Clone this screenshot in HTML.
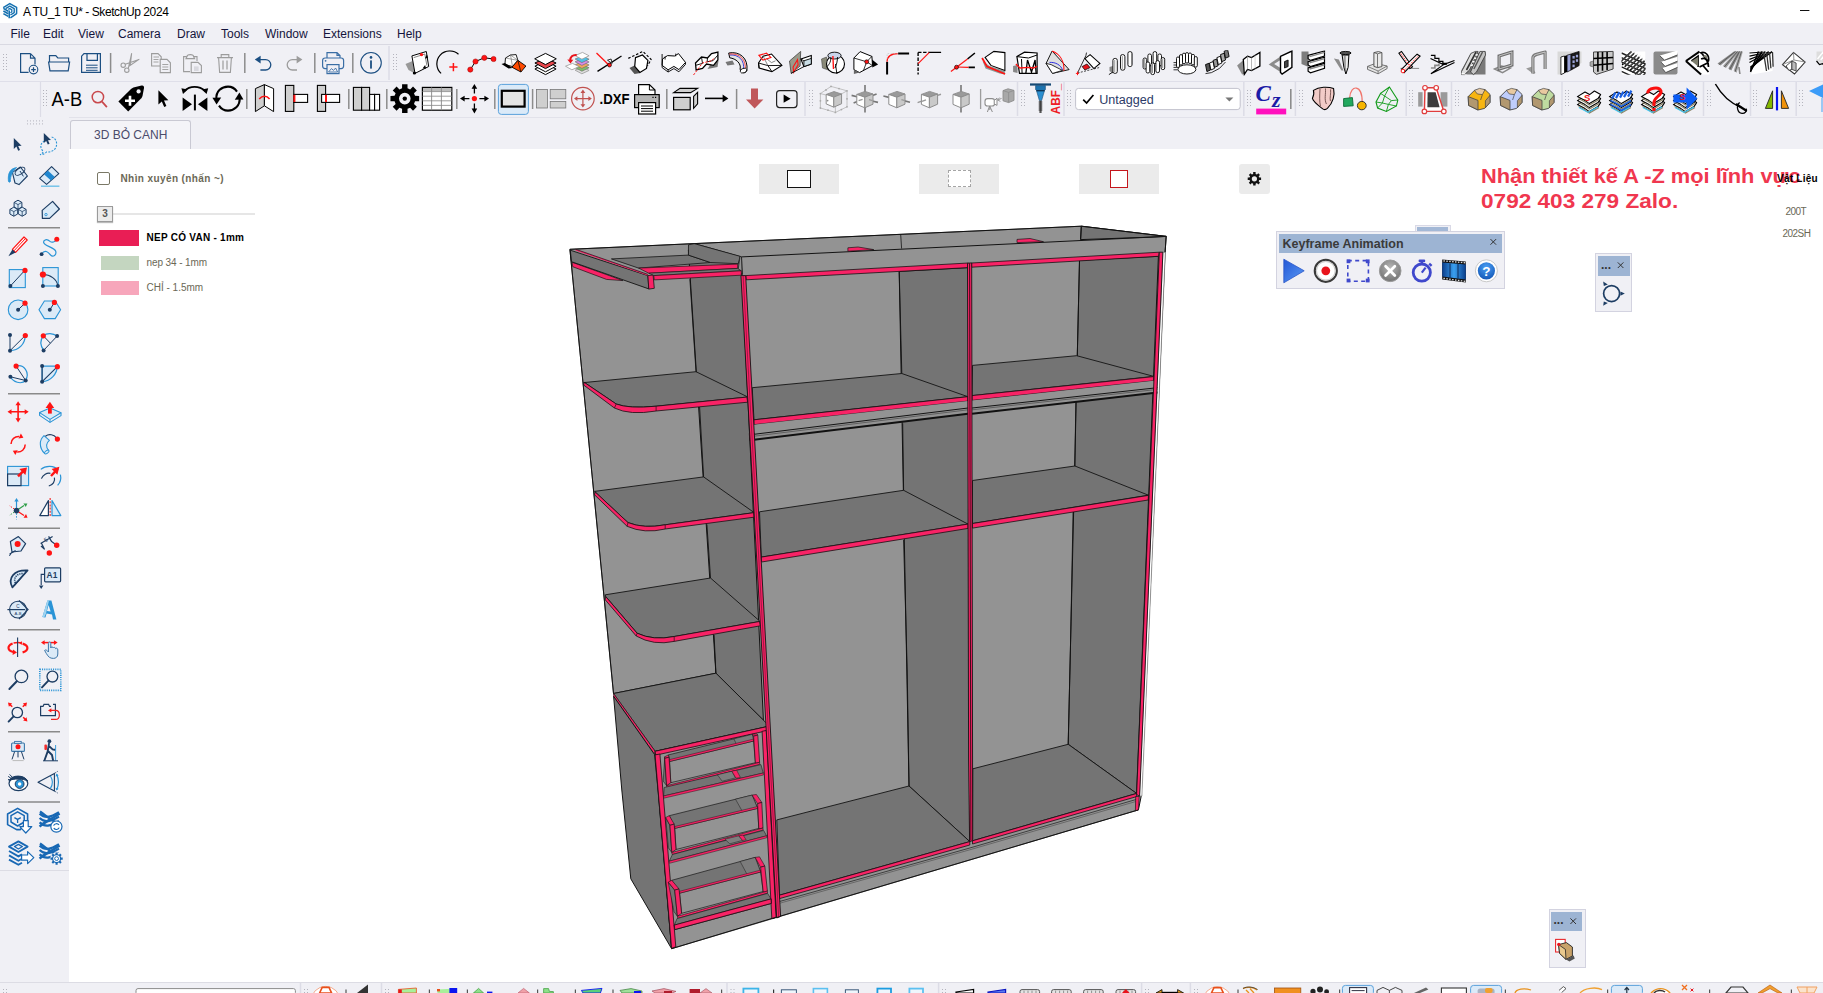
<!DOCTYPE html><html><head><meta charset="utf-8"><title>A TU_1 TU* - SketchUp 2024</title><style>
html,body{margin:0;padding:0;}
body{width:1823px;height:993px;overflow:hidden;background:#fff;position:relative;
 font-family:"Liberation Sans",sans-serif;font-size:12px;color:#000;}
.abs{position:absolute;}
#title{left:0;top:0;width:1823px;height:23px;background:#fff;}
#title .t{left:23px;top:5px;font-size:12px;line-height:15px;color:#000;white-space:nowrap;letter-spacing:-0.42px;}
#menubar{left:0;top:23px;width:1823px;height:21px;background:#f0f0f5;}
#menubar span{position:absolute;top:4px;font-size:12px;line-height:15px;color:#14143c;white-space:nowrap;}
#tb1{left:0;top:44px;width:1823px;height:37px;background:#f0f0f5;border-top:1.5px solid #d9d9e2;box-sizing:border-box;}
#tb2{left:0;top:80.5px;width:1823px;height:36.5px;background:#f0f0f5;border-top:1.6px solid #dfdfe9;box-sizing:border-box;}
#tabrow{left:0;top:117px;width:1823px;height:32px;background:#f0f0f5;border-top:1px solid #e2e2ea;box-sizing:border-box;}
#lefttb{left:0;top:117px;width:69px;height:865px;background:#f0f0f5;}
#leftlow{left:0;top:870px;width:69px;height:112px;background:#f0f0f5;border-top:1px solid #dcdce4;box-sizing:border-box}
#tab{left:70px;top:120px;width:121px;height:29px;box-sizing:border-box;border:1px solid #c9c9d3;border-bottom:none;
 border-radius:3px 3px 0 0;background:#f4f4f8;}
#tab span{position:absolute;left:23px;top:7px;font-size:12px;line-height:15px;color:#4b4b6b;white-space:nowrap;}
#view{left:69px;top:149px;width:1754px;height:833px;background:#fff;}
#bottom{left:0;top:982px;width:1823px;height:11px;background:#f0f0f5;border-top:1px solid #dcdce4;box-sizing:border-box;}
.leg{font-size:10px;line-height:12px;white-space:nowrap;color:#6b6856;}
.btn{background:#ebebeb;}
#red{left:1480.5px;top:164.3px;font-size:20px;line-height:25px;font-weight:bold;color:#f0374f;white-space:nowrap;}
#red div{transform-origin:0 0;}
.panel{background:#f0f0f5;border:1px solid #d3d3e0;box-sizing:border-box;}
.ptitle{background:#9db4d3;}
svg{position:absolute;left:0;top:0;}
</style></head><body>
<div id="title" class="abs"><div class="t abs">A TU_1 TU* - SketchUp 2024</div></div>
<div id="menubar" class="abs"><span style="left:10.5px">File</span><span style="left:43px">Edit</span><span style="left:78px">View</span><span style="left:118px">Camera</span><span style="left:177px">Draw</span><span style="left:221px">Tools</span><span style="left:265px">Window</span><span style="left:323px">Extensions</span><span style="left:397px">Help</span></div>
<div id="tb1" class="abs"></div><div id="tb2" class="abs"></div><div id="tabrow" class="abs"></div>
<div id="view" class="abs"></div>
<div id="lefttb" class="abs"></div><div id="leftlow" class="abs"></div>
<div id="tab" class="abs"><span>3D BỎ CANH</span></div>
<div id="bottom" class="abs"></div>
<div class="abs" style="left:97px;top:172px;width:13px;height:13px;border:1px solid #7a7866;border-radius:2px;box-sizing:border-box;background:#fff"></div>
<div class="abs leg" id="lg0" style="left:120.5px;top:173px;font-weight:bold;letter-spacing:0.4px">Nhìn xuyên (nhấn ~)</div>
<div class="abs" style="left:113px;top:212.5px;width:142px;height:2px;background:#e6e6e6"></div>
<div class="abs" style="left:97px;top:206px;width:16px;height:16px;border:1px solid #9a9a9a;box-sizing:border-box;background:#ebebeb;box-shadow:0 1px 1px #bbb;font-size:10px;line-height:14px;text-align:center;color:#555;font-weight:bold">3</div>
<div class="abs" style="left:99px;top:230px;width:40px;height:15.5px;background:#e91e55"></div>
<div class="abs leg" id="lg1" style="left:146.5px;top:232px;font-weight:bold;color:#000;letter-spacing:0.26px">NEP CÓ VAN - 1mm</div>
<div class="abs" style="left:101px;top:256px;width:38px;height:13.5px;background:#c4d6c0"></div>
<div class="abs leg" id="lg2" style="left:146.5px;top:257px;letter-spacing:-0.1px">nep 34 - 1mm</div>
<div class="abs" style="left:101px;top:281px;width:38px;height:13.5px;background:#f7a6bb"></div>
<div class="abs leg" id="lg3" style="left:146.5px;top:282px;">CHỈ - 1.5mm</div>
<div class="abs btn" style="left:759px;top:164px;width:80px;height:29.5px"></div>
<div class="abs" style="left:786.5px;top:170px;width:24.5px;height:17.5px;box-sizing:border-box;border:1.5px solid #111;background:#fff"></div>
<div class="abs btn" style="left:919px;top:164px;width:80px;height:29.5px"></div>
<div class="abs" style="left:947.5px;top:170px;width:23.5px;height:17px;box-sizing:border-box;border:1.5px dashed #a5a5a5;background:#fff"></div>
<div class="abs btn" style="left:1079px;top:164px;width:80px;height:29.5px"></div>
<div class="abs" style="left:1110px;top:170px;width:18px;height:17.5px;box-sizing:border-box;border:1.5px solid #c4161c;background:#fff"></div>
<div class="abs btn" style="left:1238.5px;top:164px;width:31.5px;height:29.5px;border-radius:3px"></div>
<div id="red" class="abs"><div id="r1" style="transform:scaleX(1.0905)">Nhận thiết kế A -Z mọi lĩnh vực</div><div id="r2" style="transform:scaleX(1.1295)">0792 403 279 Zalo.</div></div>
<div class="abs leg" id="vl" style="left:1777px;top:172.5px;font-weight:bold;color:#000;letter-spacing:0.25px">Vật Liệu</div>
<div class="abs leg" id="t200" style="left:1785.5px;top:205.5px;letter-spacing:-0.6px">200T</div>
<div class="abs leg" id="t202" style="left:1782.5px;top:227.5px;letter-spacing:-0.55px">202SH</div>
<div class="abs" style="left:1414.5px;top:224.5px;width:36px;height:8px;background:#f0f0f5;border:1px solid #d9d9e6;box-sizing:border-box"></div><div class="abs" style="left:1416.6px;top:227px;width:31.4px;height:4px;background:#a3b8d6"></div>
<div class="abs panel" style="left:1276px;top:230.5px;width:229px;height:58px"></div>
<div class="abs ptitle" style="left:1278.5px;top:233.5px;width:223px;height:19.5px"></div>
<div class="abs" id="kf" style="left:1282.5px;top:236.6px;font-size:12.5px;line-height:15px;font-weight:bold;color:#3a3a3a;white-space:nowrap">Keyframe Animation</div>
<div class="abs panel" style="left:1595px;top:253px;width:37px;height:59px"></div>
<div class="abs ptitle" style="left:1597.5px;top:256px;width:32px;height:19.5px"></div>
<div class="abs" style="left:1601px;top:257.5px;font-size:12px;line-height:15px;font-weight:bold;color:#333">...</div>
<div class="abs panel" style="left:1548.5px;top:909px;width:37px;height:58.5px"></div>
<div class="abs ptitle" style="left:1551px;top:912px;width:31px;height:19px"></div>
<div class="abs" style="left:1553.5px;top:913px;font-size:12px;line-height:15px;font-weight:bold;color:#333">...</div>
<svg width="1823" height="993" viewBox="0 0 1823 993">
<g id="wardrobe" stroke-linejoin="round"><polygon points="569.9,249.3 694.2,243.6 716.0,673.2 613.5,693.5" fill="#939393" stroke="#111" stroke-width="0.99"/>
<polygon points="688.4,250.0 741.5,256.9 766.7,723.4 715.9,673.2" fill="#747474" stroke="#111" stroke-width="0.99"/>
<polyline points="689.9,279.2 696.0,371.7" fill="none" stroke="#111" stroke-width="0.88"/>
<polygon points="694.2,243.6 1081.3,226.2 1166.2,236.4 1165.1,252.2 1141.2,796.3 1138.4,809.9 773.0,918.3 741.0,256.9" fill="#939393" stroke="#111" stroke-width="0.99"/>
<polygon points="1162.9,252.2 1165.3,252.2 1141.9,796.0 1139.5,796.0" fill="#fff" stroke="#777" stroke-width="0.66"/>
<polygon points="1081.3,226.2 1166.2,236.4 1152.0,237.1 1080.6,239.6" fill="#747474" stroke="#111" stroke-width="0.99"/>
<polyline points="1081.3,226.2 1080.6,239.6" fill="none" stroke="#111" stroke-width="0.99"/>
<polyline points="900.7,234.5 901.6,248.6" fill="none" stroke="#111" stroke-width="0.77"/>
<polyline points="741.5,256.9 1166.2,236.4" fill="none" stroke="#111" stroke-width="0.99"/>
<polygon points="847.9,247.8 858.1,247.0 873.8,249.6 847.9,251.2" fill="#f82366" stroke="#111" stroke-width="0.66"/>
<polygon points="1017.0,239.4 1030.0,238.5 1043.5,241.7 1017.0,242.6" fill="#f82366" stroke="#111" stroke-width="0.66"/>
<polyline points="741.5,256.9 742.1,274.4" fill="none" stroke="#111" stroke-width="0.99"/>
<polyline points="1166.2,236.4 1165.1,252.2" fill="none" stroke="#111" stroke-width="0.99"/>
<polygon points="899.2,271.4 968.3,267.6 969.8,841.6 909.0,786.0" fill="#747474" stroke="#111" stroke-width="0.99"/>
<polyline points="899.2,271.4 901.8,373.5" fill="none" stroke="#111" stroke-width="0.88"/>
<polygon points="752.2,387.7 901.8,373.5 967.9,396.7 754.0,419.8" fill="#747474" stroke="#111" stroke-width="0.88"/>
<polyline points="902.7,423.4 903.6,490.5" fill="none" stroke="#111" stroke-width="0.88"/>
<polygon points="759.5,511.8 903.6,490.3 968.0,524.1 761.3,557.1" fill="#747474" stroke="#111" stroke-width="0.88"/>
<polyline points="903.6,539.9 907.2,670.0 909.0,786.0" fill="none" stroke="#111" stroke-width="0.88"/>
<polygon points="776.8,819.9 909.0,786.0 969.8,841.6 779.5,895.2" fill="#747474" stroke="#111" stroke-width="0.88"/>
<polygon points="1079.5,260.3 1158.4,256.3 1136.6,793.5 1068.2,744.3" fill="#747474" stroke="#111" stroke-width="0.99"/>
<polyline points="1079.5,260.3 1077.3,355.5" fill="none" stroke="#111" stroke-width="0.88"/>
<polygon points="972.5,365.4 1076.7,355.7 1153.8,376.4 972.1,395.6" fill="#747474" stroke="#111" stroke-width="0.88"/>
<polyline points="1075.8,402.5 1074.9,466.0" fill="none" stroke="#111" stroke-width="0.88"/>
<polygon points="972.5,480.5 1074.9,466.0 1148.4,495.2 972.5,523.5" fill="#747474" stroke="#111" stroke-width="0.88"/>
<polyline points="1073.1,511.8 1070.4,650.0 1068.2,744.3" fill="none" stroke="#111" stroke-width="0.88"/>
<polygon points="972.8,768.8 1068.2,744.3 1136.6,793.4 972.5,840.8" fill="#747474" stroke="#111" stroke-width="0.88"/>
<polygon points="745.7,275.6 968.3,263.0 968.3,267.6 746.3,279.8" fill="#f82366" stroke="#111" stroke-width="0.77"/>
<polygon points="971.6,263.0 1159.3,252.2 1158.6,256.3 971.6,267.2" fill="#f82366" stroke="#111" stroke-width="0.77"/>
<polygon points="754.0,419.8 967.9,396.7 967.9,401.1 754.0,424.7" fill="#f82366" stroke="#111" stroke-width="0.77"/>
<polygon points="972.1,395.6 1153.8,376.6 1153.6,380.8 972.1,400.4" fill="#f82366" stroke="#111" stroke-width="0.77"/>
<polygon points="761.3,557.1 968.0,524.1 968.0,528.4 761.6,562.0" fill="#f82366" stroke="#111" stroke-width="0.77"/>
<polygon points="972.5,523.5 1148.4,495.4 1148.2,500.0 972.5,528.1" fill="#f82366" stroke="#111" stroke-width="0.77"/>
<polygon points="779.5,895.2 969.8,841.6 969.8,845.0 779.5,898.6" fill="#f82366" stroke="#111" stroke-width="0.77"/>
<polygon points="972.5,840.8 1136.6,793.5 1136.6,796.6 972.5,844.0" fill="#f82366" stroke="#111" stroke-width="0.77"/>
<polyline points="779.5,901.5 969.8,848.0 1136.0,799.5" fill="none" stroke="#111" stroke-width="0.66"/>
<polyline points="779.5,903.3 969.8,849.8 1135.8,801.5" fill="none" stroke="#444" stroke-width="0.55"/>
<polygon points="754.0,424.7 967.9,401.1 968.0,413.8 754.0,439.7" fill="#939393"/>
<polygon points="972.1,400.4 1153.6,380.8 1157.4,392.6 972.1,413.8" fill="#939393"/>
<polyline points="754.0,434.3 968.0,408.0" fill="none" stroke="#111" stroke-width="0.99"/>
<polyline points="754.0,436.2 968.0,409.8" fill="none" stroke="#333" stroke-width="0.55"/>
<polyline points="754.0,439.7 968.0,413.8" fill="none" stroke="#111" stroke-width="1.98"/>
<polyline points="972.1,408.0 1157.4,387.7" fill="none" stroke="#111" stroke-width="0.99"/>
<polyline points="972.1,409.8 1157.4,389.4" fill="none" stroke="#333" stroke-width="0.55"/>
<polyline points="972.1,413.8 1157.4,392.6" fill="none" stroke="#111" stroke-width="1.98"/>
<polygon points="749.3,433.4 754.2,433.0 754.6,440.2 749.8,440.6" fill="#f82366" stroke="#111" stroke-width="0.77"/>
<polyline points="699.6,407.0 703.6,476.9" fill="none" stroke="#111" stroke-width="0.88"/>
<polyline points="706.9,524.5 710.5,578.0" fill="none" stroke="#111" stroke-width="0.88"/>
<polyline points="714.1,635.0 715.9,673.2" fill="none" stroke="#111" stroke-width="0.88"/>
<path d="M583.6,382.6 L696.0,371.7 L746.8,396.5 L746.8,397.1 L656.1,406.2 Q628.9,408.9 616.2,404.0 L584.3,382.4 Z" fill="#747474" stroke="#111" stroke-width="0.88"/>
<path d="M584.3,382.4 L616.2,404.0 Q628.9,408.9 656.1,406.2 L746.8,397.1 L747.7,402.2 L656.1,411.0 Q629.8,415.5 614.4,408.0 L583.6,385.0 Z" fill="#f82366" stroke="#111" stroke-width="0.77"/>
<polyline points="656.1,406.2 656.1,411.0" fill="none" stroke="#111" stroke-width="0.66"/>
<polyline points="616.2,404.0 614.4,408.0" fill="none" stroke="#111" stroke-width="0.66"/>
<path d="M594.5,491.4 L703.6,476.9 L753.3,512.0 L753.7,512.7 L665.2,524.8 Q643.8,528.9 628.0,522.6 L595.2,492.0 Z" fill="#747474" stroke="#111" stroke-width="0.88"/>
<path d="M595.2,492.0 L628.0,522.6 Q643.8,528.9 665.2,524.8 L753.7,512.7 L754.0,517.2 L665.2,529.0 Q644.2,534.0 627.1,526.3 L594.5,494.8 Z" fill="#f82366" stroke="#111" stroke-width="0.77"/>
<polyline points="665.2,524.8 665.2,529.0" fill="none" stroke="#111" stroke-width="0.66"/>
<polyline points="628.0,522.6 627.1,526.3" fill="none" stroke="#111" stroke-width="0.66"/>
<path d="M605.3,594.8 L710.5,578.0 L759.5,620.9 L759.5,621.5 L674.2,636.5 Q653.0,640.8 637.1,633.2 L605.6,596.4 Z" fill="#747474" stroke="#111" stroke-width="0.88"/>
<path d="M605.6,596.4 L637.1,633.2 Q653.0,640.8 674.2,636.5 L759.5,621.5 L760.4,625.8 L674.2,641.4 Q653.4,645.9 636.2,636.0 L605.3,599.9 Z" fill="#f82366" stroke="#111" stroke-width="0.77"/>
<polyline points="674.2,636.5 674.2,641.4" fill="none" stroke="#111" stroke-width="0.66"/>
<polyline points="637.1,633.2 636.2,636.0" fill="none" stroke="#111" stroke-width="0.66"/>
<polygon points="613.5,693.5 715.9,673.2 766.7,723.4 766.7,727.0 655.2,751.4" fill="#747474" stroke="#111" stroke-width="0.88"/>
<polygon points="613.5,693.5 655.2,751.4 654.6,754.6 613.6,696.3" fill="#f82366" stroke="#111" stroke-width="0.55"/>
<polygon points="613.6,696.3 654.6,754.6 658.0,790.0 671.6,948.7 630.8,878.8 621.8,790.0" fill="#747474" stroke="#111" stroke-width="0.99"/>
<polygon points="655.1,751.3 767.5,726.5 776.0,917.2 671.6,948.7" fill="#939393" stroke="#111" stroke-width="0.99"/>
<polygon points="655.1,751.3 767.5,726.5 767.6,730.6 655.7,755.2" fill="#f82366" stroke="#111" stroke-width="0.77"/>
<polygon points="655.1,754.9 659.9,754.0 675.8,946.8 671.6,948.4" fill="#f82366" stroke="#111" stroke-width="0.77"/>
<polygon points="762.1,731.3 766.3,730.5 776.1,917.2 771.8,918.4" fill="#f82366" stroke="#111" stroke-width="0.77"/>
<polygon points="674.3,925.1 771.0,898.9 771.3,903.4 674.8,929.6" fill="#f82366" stroke="#111" stroke-width="0.77"/>
<polygon points="668.4,754.9 752.4,734.3 753.6,740.5 669.6,761.0" fill="#747474" stroke="#111" stroke-width="0.66"/>
<polygon points="733.9,738.8 752.4,734.3 753.6,741.0 736.8,745.1" fill="#7c7c7c" stroke="#111" stroke-width="0.44"/>
<polygon points="669.6,761.5 753.6,741.0 755.4,762.7 670.8,782.7" fill="#939393" stroke="#111" stroke-width="0.66"/>
<polygon points="664.8,756.7 664.7,758.4 666.6,785.7 663.2,781.1" fill="#747474" stroke="#111" stroke-width="0.55"/>
<polygon points="664.8,756.7 668.4,754.9 669.0,757.2 664.7,758.4" fill="#f82366" stroke="#111" stroke-width="0.55"/>
<polygon points="664.7,758.4 669.0,757.2 670.8,782.7 666.6,785.7" fill="#f82366" stroke="#111" stroke-width="0.66"/>
<polygon points="669.6,759.6 753.6,739.1 753.6,741.0 669.6,761.5" fill="#f82366" stroke="#111" stroke-width="0.44"/>
<polygon points="752.4,734.3 756.7,733.7 757.8,735.0 753.6,736.2" fill="#f82366" stroke="#111" stroke-width="0.55"/>
<polygon points="753.6,736.2 757.8,735.0 759.6,762.3 755.4,763.3" fill="#f82366" stroke="#111" stroke-width="0.66"/>
<polygon points="666.6,785.7 759.6,762.3 759.7,764.4 667.0,787.8" fill="#f82366" stroke="#111" stroke-width="0.55"/>
<polygon points="664.2,787.5 760.9,764.6 763.3,773.0 663.6,796.0" fill="#747474" stroke="#111" stroke-width="0.55"/>
<polygon points="717.4,774.8 731.9,771.2 735.5,777.9 722.2,781.2" fill="#7e7e7e" stroke="#111" stroke-width="0.44"/>
<polygon points="731.9,771.2 736.6,770.2 740.4,777.4 736.0,778.2" fill="#f82366" stroke="#111" stroke-width="0.44"/>
<polygon points="663.6,796.0 763.3,773.0 763.4,775.0 663.8,798.2" fill="#f82366" stroke="#111" stroke-width="0.44"/>
<polygon points="669.3,815.7 752.1,795.1 757.6,807.9 674.8,827.9" fill="#747474" stroke="#111" stroke-width="0.66"/>
<polygon points="735.5,799.2 752.1,795.1 757.6,808.4 742.7,812.0" fill="#7c7c7c" stroke="#111" stroke-width="0.44"/>
<polygon points="674.8,828.4 757.6,808.4 758.8,828.4 676.0,849.5" fill="#939393" stroke="#111" stroke-width="0.66"/>
<polygon points="665.7,817.5 669.9,825.3 671.8,852.5 668.4,847.9" fill="#747474" stroke="#111" stroke-width="0.55"/>
<polygon points="665.7,817.5 669.3,815.7 674.2,824.1 669.9,825.3" fill="#f82366" stroke="#111" stroke-width="0.55"/>
<polygon points="669.9,825.3 674.2,824.1 676.0,849.5 671.8,852.5" fill="#f82366" stroke="#111" stroke-width="0.66"/>
<polygon points="674.8,826.5 757.6,806.5 757.6,808.4 674.8,828.4" fill="#f82366" stroke="#111" stroke-width="0.44"/>
<polygon points="752.1,795.1 756.4,794.5 761.8,802.4 757.6,803.6" fill="#f82366" stroke="#111" stroke-width="0.55"/>
<polygon points="757.6,803.6 761.8,802.4 763.0,828.0 758.8,829.0" fill="#f82366" stroke="#111" stroke-width="0.66"/>
<polygon points="671.8,852.5 763.0,828.0 763.1,830.1 672.2,854.6" fill="#f82366" stroke="#111" stroke-width="0.55"/>
<polygon points="672.4,854.5 763.6,830.4 766.6,835.8 669.3,861.2" fill="#747474" stroke="#111" stroke-width="0.55"/>
<polygon points="724.9,839.2 738.8,835.8 742.5,840.4 729.8,843.8" fill="#7e7e7e" stroke="#111" stroke-width="0.44"/>
<polygon points="738.8,835.8 743.1,835.0 746.1,839.8 742.5,840.4" fill="#f82366" stroke="#111" stroke-width="0.44"/>
<polygon points="669.3,861.2 766.6,835.8 766.7,837.8 669.5,863.3" fill="#f82366" stroke="#111" stroke-width="0.44"/>
<polygon points="671.8,880.3 755.2,857.4 760.6,871.5 679.6,892.7" fill="#747474" stroke="#111" stroke-width="0.66"/>
<polygon points="740.2,861.5 755.2,857.4 760.6,872.0 747.6,875.4" fill="#7c7c7c" stroke="#111" stroke-width="0.44"/>
<polygon points="679.6,893.2 760.6,872.0 763.2,891.5 681.6,913.3" fill="#939393" stroke="#111" stroke-width="0.66"/>
<polygon points="668.2,882.1 674.7,890.1 677.4,916.3 674.0,911.7" fill="#747474" stroke="#111" stroke-width="0.55"/>
<polygon points="668.2,882.1 671.8,880.3 679.0,888.9 674.7,890.1" fill="#f82366" stroke="#111" stroke-width="0.55"/>
<polygon points="674.7,890.1 679.0,888.9 681.6,913.3 677.4,916.3" fill="#f82366" stroke="#111" stroke-width="0.66"/>
<polygon points="679.6,891.3 760.6,870.1 760.6,872.0 679.6,893.2" fill="#f82366" stroke="#111" stroke-width="0.44"/>
<polygon points="755.2,857.4 759.5,856.8 764.8,866.0 760.6,867.2" fill="#f82366" stroke="#111" stroke-width="0.55"/>
<polygon points="760.6,867.2 764.8,866.0 767.4,891.1 763.2,892.1" fill="#f82366" stroke="#111" stroke-width="0.66"/>
<polygon points="677.4,916.3 767.4,891.1 767.5,893.2 677.8,918.4" fill="#f82366" stroke="#111" stroke-width="0.55"/>
<polygon points="677.0,918.6 767.6,893.4 771.0,898.9 674.3,925.1" fill="#747474" stroke="#111" stroke-width="0.55"/>
<polygon points="674.3,925.1 771.0,898.9 771.3,903.4 674.8,929.6" fill="#f82366" stroke="#111" stroke-width="0.77"/>
<polygon points="740.9,275.6 745.7,275.6 780.6,916.4 776.7,918.0" fill="#f82366" stroke="#111" stroke-width="0.88"/>
<polyline points="743.1,275.6 778.7,917.5" fill="none" stroke="#5a0d28" stroke-width="0.55"/>
<polygon points="967.5,263.2 971.7,262.9 972.7,840.6 969.6,841.6 968.6,760.0" fill="#f82366" stroke="#111" stroke-width="0.88"/>
<polyline points="969.6,263.2 970.9,840.5" fill="none" stroke="#2a0410" stroke-width="0.88"/>
<polygon points="1159.3,252.2 1162.9,252.2 1139.6,796.3 1136.6,794.5" fill="#f82366" stroke="#111" stroke-width="0.88"/>
<polygon points="1135.7,796.5 1139.2,796.5 1138.4,809.9 1135.4,810.8" fill="#f82366" stroke="#111" stroke-width="0.66"/>
<polygon points="611.4,258.9 688.4,255.1 710.5,262.5 638.6,268.1" fill="#747474" stroke="#111" stroke-width="0.77"/>
<polygon points="688.5,244.8 694.2,243.6 740.1,256.3 738.3,263.7 710.5,262.5 688.4,255.1" fill="#747474" stroke="#111" stroke-width="0.77"/>
<polygon points="740.1,256.3 741.5,256.9 742.1,274.4 738.3,268.6" fill="#939393" stroke="#111" stroke-width="0.66"/>
<polygon points="638.6,268.1 737.7,264.1 737.7,268.4 648.8,273.2" fill="#f82366" stroke="#111" stroke-width="0.66"/>
<polygon points="648.8,273.2 737.7,268.4 741.3,270.8 653.7,275.6" fill="#747474" stroke="#111" stroke-width="0.55"/>
<polygon points="653.7,275.6 741.3,270.8 741.3,275.2 654.3,279.9" fill="#f82366" stroke="#111" stroke-width="0.66"/>
<polygon points="572.1,262.3 605.9,274.4 622.9,280.6 606.5,279.4 572.7,266.7" fill="#f82366" stroke="#111" stroke-width="0.66"/>
<polygon points="570.3,250.2 647.9,275.6 648.8,288.9 571.5,261.7" fill="#747474" stroke="#111" stroke-width="0.88"/>
<polyline points="575.7,249.9 647.9,275.0" fill="none" stroke="#f82366" stroke-width="1.32"/>
<polyline points="575.7,249.3 647.9,274.4" fill="none" stroke="#111" stroke-width="0.66"/>
<polygon points="647.9,275.6 653.1,275.0 654.3,288.3 648.8,289.1" fill="#f82366" stroke="#111" stroke-width="0.77"/>
<polyline points="569.9,249.3 694.2,243.6 1081.3,226.2 1166.2,236.4" fill="none" stroke="#111" stroke-width="0.66"/>
<polyline points="569.9,249.3 613.5,693.5" fill="none" stroke="#111" stroke-width="0.66"/>
<polyline points="671.6,948.7 1138.4,809.9" fill="none" stroke="#111" stroke-width="0.66"/></g>
<g id="tb1i"><rect x="3" y="54" width="1" height="1" fill="#b4b4bd"/><rect x="6" y="54" width="1" height="1" fill="#b4b4bd"/><rect x="3" y="57" width="1" height="1" fill="#b4b4bd"/><rect x="6" y="57" width="1" height="1" fill="#b4b4bd"/><rect x="3" y="60" width="1" height="1" fill="#b4b4bd"/><rect x="6" y="60" width="1" height="1" fill="#b4b4bd"/><rect x="3" y="63" width="1" height="1" fill="#b4b4bd"/><rect x="6" y="63" width="1" height="1" fill="#b4b4bd"/><rect x="3" y="66" width="1" height="1" fill="#b4b4bd"/><rect x="6" y="66" width="1" height="1" fill="#b4b4bd"/><rect x="3" y="69" width="1" height="1" fill="#b4b4bd"/><rect x="6" y="69" width="1" height="1" fill="#b4b4bd"/><path d="M30.5,53.6 H20.6 V72.4 H28.6 M30.5,53.6 L35,58.2 V64.4 M30.5,53.6 V58.2 H35" fill="none" stroke="#1c4f82" stroke-width="1.2" stroke-linejoin="miter"/><circle cx="33.5" cy="69.6" r="4.3" fill="#f0f0f5" stroke="#1c4f82" stroke-width="1.1"/><path d="M31.2,69.6 H35.8 M33.5,67.3 V71.9" fill="none" stroke="#1c4f82" stroke-width="1.2"/><path d="M49.5,62 V55.6 H55.8 L57.8,58 H68.6 V62" fill="none" stroke="#1c4f82" stroke-width="1.2" stroke-linejoin="miter"/><path d="M48.6,62 H69.6 L68.2,70.8 H50 Z" fill="none" stroke="#1c4f82" stroke-width="1.2" stroke-linejoin="miter"/><path d="M84,53.6 H100.4 V72.4 H81.6 V56.2 Z" fill="none" stroke="#1c4f82" stroke-width="1.2" stroke-linejoin="miter"/><path d="M87,53.6 V60.4 H97.4 V53.6" fill="none" stroke="#1c4f82" stroke-width="1.2" stroke-linejoin="miter"/><path d="M86,65.2 H97.6 M86,67.8 H97.6 M86,70.3 H97.6" fill="none" stroke="#1c4f82" stroke-width="1.0"/><line x1="110.6" y1="53" x2="110.6" y2="73" stroke="#8c8c8c" stroke-width="1.5"/><circle cx="123.2" cy="65.2" r="2.2" fill="none" stroke="#9c9c9c" stroke-width="1.1"/><circle cx="126.8" cy="70.2" r="2.2" fill="none" stroke="#9c9c9c" stroke-width="1.1"/><path d="M125.2,64.3 L139,59.4 L128.5,66.5 M128.3,68.4 L131.6,53.6 L130.2,65.2" fill="none" stroke="#9c9c9c" stroke-width="1.1" stroke-linejoin="round"/><path d="M161.2,62 V66 H151.6 V53.6 H158 L161.2,56.8 V59" fill="none" stroke="#9c9c9c" stroke-width="1.1"/><path d="M160.2,59.4 H167 L170.4,62.8 V72.6 H160.2 Z" fill="#f0f0f5" stroke="#9c9c9c" stroke-width="1.1"/><path d="M153.5,57 H159 M153.5,59.5 H158.5 M153.5,62 H158.5 M162.3,64.5 H168.3 M162.3,67 H168.3 M162.3,69.5 H168.3" fill="none" stroke="#9c9c9c" stroke-width="0.9"/><path d="M190,71.6 H183.6 V56.6 H197 V61" fill="none" stroke="#9c9c9c" stroke-width="1.1"/><path d="M187,56.6 C187,54 193.6,54 193.6,56.6 L194.6,58.6 H186 Z" fill="#f0f0f5" stroke="#9c9c9c" stroke-width="1.1"/><path d="M191.2,62.4 H198 L201.4,65.6 V72.6 H191.2 Z" fill="#f0f0f5" stroke="#9c9c9c" stroke-width="1.1"/><rect x="194" y="66.4" width="4.6" height="4.6" fill="#d8d8de"/><path d="M217,57.6 H233 M221.2,57.4 V54.6 H228.8 V57.4 M218.6,57.8 L219.6,72.4 H230.4 L231.4,57.8" fill="none" stroke="#9c9c9c" stroke-width="1.1"/><path d="M223,60.6 V69.4 M227,60.6 V69.4" fill="none" stroke="#9c9c9c" stroke-width="1.2"/><line x1="244.8" y1="53" x2="244.8" y2="73" stroke="#8c8c8c" stroke-width="1.5"/><polygon points="254.8,59.6 260.6,55.8 260.6,63.4" fill="#1c4f82"/><path d="M260,59.6 H265.6 A5.2,5.2 0 0 1 265.6,70 H260.4" fill="none" stroke="#1c4f82" stroke-width="1.3"/><polygon points="302.4,59.6 296.6,55.8 296.6,63.4" fill="#9c9c9c"/><path d="M297,59.6 H292.4 A5.2,5.2 0 0 0 292.4,70 H297" fill="none" stroke="#9c9c9c" stroke-width="1.3"/><line x1="314.8" y1="53" x2="314.8" y2="73" stroke="#8c8c8c" stroke-width="1.5"/><path d="M327,58 V52.6 H337 L340,55.4 V58 M337,52.6 V55.4 H340" fill="none" stroke="#3a6ea5" stroke-width="1.2"/><rect x="322.6" y="58" width="21" height="10.6" fill="none" stroke="#3a6ea5" stroke-width="1.2" rx="2.5"/><rect x="327" y="64.6" width="12" height="9" fill="#f0f0f5" stroke="#3a6ea5" stroke-width="1.2"/><path d="M328.5,72 L331.5,68.6 L333.5,70.4 L335.6,68 L337.6,72 Z" fill="none" stroke="#3a6ea5" stroke-width="0.9"/><circle cx="325.6" cy="60.8" r="0.9" fill="#3a6ea5"/><line x1="352.8" y1="53" x2="352.8" y2="73" stroke="#8c8c8c" stroke-width="1.5"/><circle cx="371" cy="62.8" r="10.3" fill="none" stroke="#1c4f82" stroke-width="1.1"/><circle cx="371" cy="57.4" r="1.3" fill="#1c4f82"/><rect x="370.1" y="60.4" width="1.8" height="8.2" fill="#1c4f82"/><line x1="389" y1="46" x2="389" y2="80" stroke="#dcdce6" stroke-width="1.5"/><rect x="393" y="54" width="1" height="1" fill="#b4b4bd"/><rect x="396" y="54" width="1" height="1" fill="#b4b4bd"/><rect x="393" y="57" width="1" height="1" fill="#b4b4bd"/><rect x="396" y="57" width="1" height="1" fill="#b4b4bd"/><rect x="393" y="60" width="1" height="1" fill="#b4b4bd"/><rect x="396" y="60" width="1" height="1" fill="#b4b4bd"/><rect x="393" y="63" width="1" height="1" fill="#b4b4bd"/><rect x="396" y="63" width="1" height="1" fill="#b4b4bd"/><rect x="393" y="66" width="1" height="1" fill="#b4b4bd"/><rect x="396" y="66" width="1" height="1" fill="#b4b4bd"/><rect x="393" y="69" width="1" height="1" fill="#b4b4bd"/><rect x="396" y="69" width="1" height="1" fill="#b4b4bd"/><defs><clipPath id="c24"><rect x="-15" y="-12.8" width="30" height="25.6"/></clipPath><clipPath id="c12"><rect x="-12" y="-11.8" width="24" height="23.6"/></clipPath></defs><g transform="translate(417.5 63)"><g clip-path="url(#c24)"><polygon points="-12,1 -5,-2 -2.5,10.4 -9,7" fill="#999"/><polygon points="-5.6,-7.1 8.8,-11.5 11.2,3.5 -2.5,10.4" fill="#fff" stroke="#000" stroke-width="1"/><polyline points="-3.8,-5.4 7.3,-9 9.4,2.6" fill="none" stroke="#555" stroke-width="0.7"/><circle cx="4" cy="-8.4" r="1.7" fill="#ff1414"/><circle cx="-3.1" cy="10" r="1.6" fill="#000"/><polygon points="7.4,-4.5 10.6,-5 9.4,-8.6" fill="#000"/><polygon points="5,5.6 8.6,5.4 7.6,2" fill="#000"/></g></g><g transform="translate(449.5 63)"><g clip-path="url(#c24)"><path d="M-8.4,10.4 A12.5,12.5 0 0 1 9,-8.8" fill="none" stroke="#000" stroke-width="1.2"/><path d="M-0.2,4.1 H8 M3.9,0 V8.2" fill="none" stroke="#ff1414" stroke-width="1.5"/></g></g><g transform="translate(481.5 63)"><g clip-path="url(#c24)"><polyline points="-11.2,6.6 -6,-1.5 2.8,-5.2 12.1,-4" fill="none" stroke="#000" stroke-width="1"/><circle cx="-11.2" cy="6.6" r="2.6" fill="#ff1414" stroke="#900" stroke-width="0.5"/><circle cx="-6" cy="-1.5" r="2.6" fill="#ff1414" stroke="#900" stroke-width="0.5"/><circle cx="2.8" cy="-5.2" r="2.6" fill="#ff1414" stroke="#900" stroke-width="0.5"/><circle cx="12.1" cy="-4" r="2.6" fill="#ff1414" stroke="#900" stroke-width="0.5"/></g></g><g transform="translate(513.5 63)"><g clip-path="url(#c24)"><polygon points="-8,-5 -3,-8 2.6,-8.4 4.4,-2.6 -1,3.6 -8.6,1.4" fill="#fff" stroke="#000" stroke-width="0.9"/><polyline points="-8,-5 4.4,-2.6 -3,-8 -1,3.6" fill="none" stroke="#666" stroke-width="0.6"/><polygon points="-12,1 -8.6,0 -1,5 -5,5.4" fill="#000"/><polygon points="4.4,-2.6 12.4,3 7.4,9 -1.6,4.2" fill="#ff4a00" stroke="#000" stroke-width="0.9"/><polyline points="4.4,-2.6 7.4,9" fill="none" stroke="#000" stroke-width="0.7"/></g></g><g transform="translate(545.5 63)"><g clip-path="url(#c24)"><polygon points="-10.6,6 0,1 10.6,6 0,11.6" fill="#fff" stroke="#000" stroke-width="1"/><polygon points="-10.6,3.2 0,-1.8 10.6,3.2 0,8.8" fill="#fff" stroke="#000" stroke-width="1"/><polygon points="-10.6,0 0,-5 10.6,0 0,5.6" fill="#e8474c" stroke="#000" stroke-width="1"/><polygon points="-10.8,-4.2 0,-9.6 10.8,-4.2 0,1.6" fill="#fff" stroke="#000" stroke-width="1"/></g></g><g transform="translate(577.5 63)"><g clip-path="url(#c24)"><polygon points="-2.4,7.2 5,4 11.6,7.4 4.4,10.8" fill="#ddd" stroke="#999" stroke-width="0.8"/><polygon points="-2.4,4.6 5,1.4 11.6,4.8 4.4,8.2" fill="#7fbf6a" stroke="#666" stroke-width="0.6"/><polygon points="-2.4,1.8 5,-1.4 11.6,2 4.4,5.4" fill="#f0a860" stroke="#666" stroke-width="0.6"/><polygon points="-2.4,-1.2 5,-4.4 11.6,-1 4.4,2.4" fill="#d78be8" stroke="#666" stroke-width="0.6"/><polygon points="-2.4,-4 5,-7.2 11.6,-3.8 4.4,-0.4" fill="#4fc3e8" stroke="#666" stroke-width="0.6"/><polygon points="-2.4,-7.4 5,-10.6 11.6,-7.2 4.4,-3.8" fill="#fff" stroke="#999" stroke-width="0.8"/><polygon points="-12,3.2 -5,0.4 1.6,3.6 -5.6,6.8" fill="#fff" stroke="#999" stroke-width="0.8"/><path d="M-0.8,-8 C-5,-8.4 -7.4,-6 -7.2,-2.6" fill="none" stroke="#e8141c" stroke-width="2"/><polygon points="-10.2,-3.6 -4.2,-3.2 -7,0.6" fill="#e8141c"/></g></g><g transform="translate(609.5 63)"><g clip-path="url(#c24)"><polyline points="-12,8.4 12,-7" fill="none" stroke="#000" stroke-width="1.3"/><polyline points="-13,-10 -0.4,2.2" fill="none" stroke="#ff1414" stroke-width="1.3"/><polygon points="-2,-2.8 1.6,-4 2.6,0.4" fill="#fff" stroke="#000" stroke-width="0.8"/><circle cx="0" cy="2" r="2" fill="#ff1414" stroke="#000" stroke-width="0.6"/></g></g><g transform="translate(641.5 63)"><g clip-path="url(#c24)"><polygon points="-12,5 -6,2 -1,10 -7,11" fill="#555"/><polyline points="-13.2,-4.6 1.4,-11.6 9.6,-3.6 6,3" fill="none" stroke="#000" stroke-width="1.2" stroke-dasharray="2.5 1.8"/><polygon points="-6,-5.4 1,-8 6.4,-2.6 5,5.4 -1.6,9.4 -6.8,3.4" fill="#fff" stroke="#000" stroke-width="1.2"/></g></g><g transform="translate(673.5 63)"><g clip-path="url(#c24)"><polygon points="-11,-4 -6,-7.4 1,-7 5,-9.4 12,-0.6 5.4,6.6 0.4,3.4 -5.4,6.8 -11.4,2.4" fill="#fff" stroke="#000" stroke-width="1"/><polyline points="-11.4,-9 -11.4,2.4" fill="none" stroke="#000" stroke-width="0.9"/><polyline points="-8.4,-6.6 -8.4,-3.4" fill="none" stroke="#000" stroke-width="0.8"/><polyline points="-5.4,6.8 -5.4,9 0.4,5.6 5.4,8.8 12,1.4 12,-0.6" fill="none" stroke="#000" stroke-width="0.9"/><polyline points="-11.4,2.4 -11.4,4.6 -5.4,9" fill="none" stroke="#000" stroke-width="0.9"/><polyline points="2.2,-9.4 2.2,-6.6" fill="none" stroke="#000" stroke-width="0.8"/></g></g><g transform="translate(705.5 63)"><g clip-path="url(#c24)"><polygon points="6,0 13,-2 12,4 2,6" fill="#777"/><polygon points="-10,0 -4,-6 2,-5 6,-9.4 12.4,-11 12.4,-3 8,2.4 1,1 -3,5.4 -9.4,7" fill="#fff" stroke="#000" stroke-width="1.3"/><polyline points="-4,-6 -3,0.4 -9.4,2.2" fill="none" stroke="#000" stroke-width="0.9"/><polyline points="2,-5 1.6,-1.2 7.6,-2.4 12.4,-8" fill="none" stroke="#000" stroke-width="0.9"/><polyline points="-12,12 -3,0 6.4,-2.2 9,-5.6" fill="none" stroke="#ff1414" stroke-width="1" stroke-dasharray="2.2 1.4"/></g></g><g transform="translate(737.5 63)"><g clip-path="url(#c24)"><polygon points="-12,-1 -5,-2.4 -3,1.6 -10,2.6" fill="#777"/><path d="M-8.8,-10 C2,-12 11,-5 9.4,7.6 C7.6,11.6 3,9.6 2.6,6 C4,0.4 -1.6,-4.4 -7.8,-5.2 Z" fill="#e4e4e4" stroke="#000" stroke-width="1"/><path d="M-7.6,-8 C1,-8.6 7.4,-3 6,7" fill="none" stroke="#3030d0" stroke-width="0.9"/><path d="M-8.2,-9 C2,-10 9,-4 7.8,7.6" fill="none" stroke="#ff1414" stroke-width="0.7"/><ellipse cx="6" cy="7.6" rx="3.4" ry="2.2" fill="#fff" stroke="#000" stroke-width="0.8" transform="rotate(-20 6 7.6)"/></g></g><g transform="translate(769.5 63)"><g clip-path="url(#c24)"><polygon points="-11,0 -6.4,-6.8 2,-9 12.4,2.4 2.4,8.6 -10.4,5" fill="#fff" stroke="#000" stroke-width="1.1"/><polyline points="-11,0 -10.4,5" fill="none" stroke="#000" stroke-width="1"/><polyline points="-11,0 -1.6,2.6 12.4,2.4" fill="none" stroke="#000" stroke-width="0.9"/><polyline points="-1.6,2.6 2.4,8.6" fill="none" stroke="#000" stroke-width="0.9"/><polyline points="-6.4,-6.8 -1.6,2.6" fill="none" stroke="#555" stroke-width="0.7"/><polyline points="-3,-4.4 2,-0.4 6,-2.2" fill="none" stroke="#555" stroke-width="0.7"/><polygon points="-10.6,-7.6 -3,-9.8 1.4,-5.6 -6.6,-3" fill="none" stroke="#ff1414" stroke-width="1.1"/></g></g><g transform="translate(801.5 63)"><g clip-path="url(#c24)"><polygon points="-12,-2 -0.8,-11.6 -1.4,3 -10.4,10.4" fill="#9a9a8a" stroke="#444" stroke-width="0.8"/><polygon points="-8.4,4 -4,-3.4 -3.4,1.8 -7.8,9.4" fill="none" stroke="#ff1414" stroke-width="1.1"/><polygon points="-0.6,-4 9.8,-7.6 9.8,1 2.4,3.6" fill="#fff" stroke="#000" stroke-width="1.1"/><polygon points="2.4,-2.2 9.8,-4.6 9.8,1 2.4,3.6" fill="#c9dde6" stroke="#000" stroke-width="0.9"/><polyline points="-10.4,10.4 2.4,3.6" fill="none" stroke="#000" stroke-width="0.9"/><polyline points="-0.6,-4 2.4,-2.2" fill="none" stroke="#000" stroke-width="0.9"/></g></g><g transform="translate(833.5 63)"><g clip-path="url(#c24)"><polygon points="-12,-4 -7,-6 -5,3 4,10 -2,8 -11,5" fill="#8a8a78" stroke="#444" stroke-width="0.6"/><circle cx="2" cy="1" r="9" fill="#fff" stroke="#000" stroke-width="1.1"/><ellipse cx="1" cy="-7.4" rx="6.6" ry="3.4" fill="#c9d4ea" stroke="#000" stroke-width="0.9"/><path d="M-2.6,-6 C-2.6,0 -5,2 -7,4 M4,-6 C4,-2 3,2 1.4,5" fill="none" stroke="#000" stroke-width="0.9"/><polyline points="-0.6,-7 0,6" fill="none" stroke="#ff1414" stroke-width="1.4"/><polyline points="2,1 3.4,11" fill="none" stroke="#000" stroke-width="0.9"/></g></g><g transform="translate(865.5 63)"><g clip-path="url(#c24)"><polygon points="-11.6,-5 -5.4,-11.4 6.4,-6.6 7,2.6 -6,9.6 -11.6,6.6" fill="#fff" stroke="#000" stroke-width="1"/><polyline points="-11.6,-5 1.2,-1.2 6.4,-6.6" fill="none" stroke="#000" stroke-width="0.8"/><polyline points="1.2,-1.2 -2,7.4" fill="none" stroke="#000" stroke-width="0.8"/><polyline points="1.2,-1.2 7,2.6" fill="none" stroke="#000" stroke-width="0.8"/><polygon points="-11.6,6.6 -6,9.6 -11.6,11" fill="#666"/><polygon points="6.6,-3.6 12.6,1.4 6.8,4.4" fill="#000"/><circle cx="1.2" cy="-1.2" r="2" fill="#ff1414" stroke="#000" stroke-width="0.6"/></g></g><g transform="translate(897.5 63)"><g clip-path="url(#c24)"><polyline points="-10.4,-1 -10.4,11.6" fill="none" stroke="#000" stroke-width="2"/><polyline points="0.6,-9.4 11.6,-9.4" fill="none" stroke="#000" stroke-width="2"/><path d="M-10.4,-1 C-10.4,-7 -6,-9.4 0.6,-9.4" fill="none" stroke="#ff1414" stroke-width="1.4"/><polyline points="-10.4,-1 -10.4,-9.4 0.6,-9.4" fill="none" stroke="#bbb" stroke-width="0.6" stroke-dasharray="1.5 1.5"/></g></g><g transform="translate(929.5 63)"><g clip-path="url(#c24)"><polyline points="-11.4,-10.4 -11.4,11.6" fill="none" stroke="#000" stroke-width="1.4" stroke-dasharray="3.4 1.6"/><polyline points="-11.4,-10.6 -1,-10.6" fill="none" stroke="#000" stroke-width="1.2" stroke-dasharray="3.4 1.6"/><polyline points="-1,-10.6 11.6,-10.6" fill="none" stroke="#000" stroke-width="1.4"/><polyline points="-11.4,0.6 -0.4,-10.4" fill="none" stroke="#ff1414" stroke-width="1.2"/></g></g><g transform="translate(961.5 63)"><g clip-path="url(#c24)"><polyline points="6,-4 13.4,-10" fill="none" stroke="#000" stroke-width="1.6"/><polyline points="7,4.4 13.4,4.4" fill="none" stroke="#000" stroke-width="1.6"/><polyline points="-10.6,8.6 6,-4" fill="none" stroke="#ff1414" stroke-width="1.2"/><polyline points="-5,4 7,4.4" fill="none" stroke="#ff1414" stroke-width="1.2"/><circle cx="-5" cy="4.2" r="2" fill="#ff1414" stroke="#000" stroke-width="0.6"/></g></g><g transform="translate(993.5 63)"><g clip-path="url(#c24)"><polygon points="-11,-2 -8,5.4 6,10.6 11.4,11.6 11.4,8 -4,3" fill="#8b9a96"/><polygon points="-8.4,-5.6 0.4,-11.6 11.4,-10.4 11.4,7.4 -2.6,2.4" fill="#fff" stroke="#000" stroke-width="1.1"/><polyline points="-11.4,-5 -6.4,3.6 11.6,11" fill="none" stroke="#ff1414" stroke-width="1.8"/></g></g><g transform="translate(1025.5 63)"><g clip-path="url(#c24)"><polygon points="-12.4,3 -8,2 -8,10 -12.4,9" fill="#888"/><polygon points="-8.6,-6.4 -1,-10.8 11.6,-10 11.6,10.4 -6,10.4" fill="#fff" stroke="#000" stroke-width="1.2"/><polyline points="-8.6,-6.4 3,-5 11.6,-8" fill="none" stroke="#000" stroke-width="1"/><polyline points="-4,-4 -3.4,10.4" fill="none" stroke="#000" stroke-width="1"/><polyline points="0.4,10 2,-3 6,9 9.6,-3 10.6,10" fill="none" stroke="#000" stroke-width="1.3"/><polyline points="-9.6,1 -5.6,5 3,4.4 8,5 11.6,3.4" fill="none" stroke="#ff1414" stroke-width="1.3"/></g></g><g transform="translate(1057.5 63)"><g clip-path="url(#c24)"><polygon points="-11.4,0.4 -5.4,-12 11.6,6.6 -5,10.4" fill="#e0e0e0" stroke="#000" stroke-width="0.9"/><path d="M-5.4,-12 C2,-9 7,-2 6.4,7.8" fill="none" stroke="#ff1414" stroke-width="1.1"/><path d="M-8,-0.6 C-2,-1 3.4,2 5,7" fill="none" stroke="#3030e0" stroke-width="1"/><polygon points="-11.4,0.4 -6.4,1.6 5,7.4 -5,10.4" fill="#fff" stroke="#000" stroke-width="0.8"/></g></g><g transform="translate(1089.5 63)"><g clip-path="url(#c24)"><polyline points="-12,10 -3.6,-7.4 -3,-10.4" fill="none" stroke="#000" stroke-width="0.8"/><polygon points="-4.6,-4.4 0.6,-8.4 10.4,0.4 4.4,5.6" fill="#fff" stroke="#000" stroke-width="1.1"/><polyline points="-12,10 9.6,4.6" fill="none" stroke="#000" stroke-width="0.7" stroke-dasharray="2 1.4"/><polygon points="-7.4,3.6 -2.6,1 0.6,4.6 -4.6,7" fill="#e8141c" stroke="#000" stroke-width="0.7"/><path d="M-13.6,10.4 H-10.4 M-12,8.6 V12.2" fill="none" stroke="#ff1414" stroke-width="1"/></g></g><g transform="translate(1121.5 63)"><g clip-path="url(#c24)"><polygon points="-12,4 -8.6,3 -8.6,10.4 -12,8" fill="#888"/><polyline points="-12.6,11.6 -8,8.6" fill="none" stroke="#000" stroke-width="0.9"/><rect x="-8.6" y="-4.6" width="4.4" height="15" fill="#fff" stroke="#000" stroke-width="0.9" rx="2"/><rect x="-1" y="-8.4" width="4.4" height="15.6" fill="#fff" stroke="#000" stroke-width="0.9" rx="2"/><rect x="6.4" y="-11.4" width="4.2" height="15" fill="#fff" stroke="#000" stroke-width="0.9" rx="1.91"/><polyline points="-6.8,-3 -6.8,9" fill="none" stroke="#777" stroke-width="0.7"/><polyline points="0.8,-7 0.8,6" fill="none" stroke="#777" stroke-width="0.7"/><polyline points="10,-10 10,3" fill="none" stroke="#777" stroke-width="0.7"/></g></g><g transform="translate(1153.5 63)"><g clip-path="url(#c24)"><rect x="-10.4" y="-5" width="3.6" height="11" fill="#fff" stroke="#000" stroke-width="0.9" rx="1.64"/><rect x="-5.6" y="-9" width="3.6" height="12" fill="#fff" stroke="#000" stroke-width="0.9" rx="1.64"/><rect x="-0.4" y="-11.4" width="3.6" height="12" fill="#fff" stroke="#000" stroke-width="0.9" rx="1.64"/><rect x="4.4" y="-9" width="3.6" height="12" fill="#fff" stroke="#000" stroke-width="0.9" rx="1.64"/><rect x="-7.4" y="-1" width="3.6" height="11" fill="#fff" stroke="#000" stroke-width="0.9" rx="1.64"/><rect x="-2.6" y="0" width="3.6" height="11.6" fill="#fff" stroke="#000" stroke-width="0.9" rx="1.64"/><rect x="2.4" y="-2.4" width="3.6" height="12" fill="#fff" stroke="#000" stroke-width="0.9" rx="1.64"/><rect x="7.6" y="-5.4" width="3.6" height="12" fill="#fff" stroke="#000" stroke-width="0.9" rx="1.64"/><polyline points="-8.8,-4 -8.8,5" fill="none" stroke="#666" stroke-width="0.7"/><polyline points="-1,1 -1,10" fill="none" stroke="#666" stroke-width="0.7"/><polyline points="9.2,-4 9.2,5" fill="none" stroke="#666" stroke-width="0.7"/></g></g><g transform="translate(1185.5 63)"><g clip-path="url(#c24)"><ellipse cx="1.4" cy="6.4" rx="9" ry="4.6" fill="#fff" stroke="#000" stroke-width="0.9"/><rect x="-9" y="-6" width="3" height="10.5" fill="#fff" stroke="#000" stroke-width="0.9" rx="1.36"/><rect x="-6" y="-8.4" width="3" height="10.5" fill="#fff" stroke="#000" stroke-width="0.9" rx="1.36"/><rect x="-3" y="-9.8" width="3" height="10.5" fill="#fff" stroke="#000" stroke-width="0.9" rx="1.36"/><rect x="0" y="-10.4" width="3" height="10.5" fill="#fff" stroke="#000" stroke-width="0.9" rx="1.36"/><rect x="3" y="-10" width="3" height="10.5" fill="#fff" stroke="#000" stroke-width="0.9" rx="1.36"/><rect x="6" y="-8.6" width="3" height="10.5" fill="#fff" stroke="#000" stroke-width="0.9" rx="1.36"/><rect x="8.8" y="-6.4" width="3" height="10.5" fill="#fff" stroke="#000" stroke-width="0.9" rx="1.36"/><path d="M-12,-0.4 H-8.6 M-12,2 H-8.6 M-12,4.4 H-8.6 M-12,6.8 H-8" fill="none" stroke="#000" stroke-width="0.8"/></g></g><g transform="translate(1217.5 63)"><g clip-path="url(#c24)"><polygon points="-12,1.6 -8.4,0.2 -7,7 -10.6,8.6" fill="#555" stroke="#000" stroke-width="0.9"/><polygon points="-8,0 -4.4,-1.4 -3,5.4 -6.6,7" fill="#fff" stroke="#000" stroke-width="0.9"/><polygon points="-4.4,-2.6 -0.8,-4 0.6,2.8 -3,4.4" fill="#999" stroke="#000" stroke-width="0.9"/><polygon points="-0.6,-5.4 3,-6.8 4.4,0 0.8,1.6" fill="#fff" stroke="#000" stroke-width="0.9"/><polygon points="3,-8.4 6.6,-9.8 8,-3 4.4,-1.4" fill="#aaa" stroke="#000" stroke-width="0.9"/><polygon points="6.6,-11.8 10.2,-13.2 11.6,-6.4 8,-4.8" fill="#777" stroke="#000" stroke-width="0.9"/><polyline points="-12,10.6 -6,9.6 2,5.4 8,-1" fill="none" stroke="#000" stroke-width="0.8"/></g></g><g transform="translate(1249.5 63)"><g clip-path="url(#c24)"><polygon points="-12.4,2.4 -6.6,-2.4 -5.4,11 -7.4,11.4" fill="#8c8c8c"/><polygon points="-6.2,-3.6 -2,-6.8 2,-5.4 10.4,-10.6 10.4,3 2,7.6 -2,6.4 -5.2,11.4" fill="#fff" stroke="#000" stroke-width="1.3"/><polyline points="-2,-6.8 -2,6.4" fill="none" stroke="#999" stroke-width="0.7"/><polyline points="2,-5.4 2,7.6" fill="none" stroke="#999" stroke-width="0.7"/><polyline points="5.6,-7.6 5.6,5.4" fill="none" stroke="#ccc" stroke-width="0.7"/></g></g><g transform="translate(1281.5 63)"><g clip-path="url(#c24)"><polygon points="-12.8,1.4 -1,-6.4 -1,9" fill="#8c8c8c"/><polygon points="-7.4,1 -1,-3 -1,5" fill="#f0f0f5"/><polygon points="-1,-6.6 10.4,-12 10.4,4.4 0.6,11 -1,9.4" fill="#fff" stroke="#000" stroke-width="1.4"/><polygon points="3,-1.4 6.6,-3 6.6,3.6 3,5" fill="#444" stroke="#000" stroke-width="0.8"/></g></g><g transform="translate(1313.5 63)"><g clip-path="url(#c24)"><polygon points="-12,-11.6 -5,-11.6 -5,4 -12,1" fill="#7d7d7d"/><polygon points="-5.4,-7.6 11,-12 11,-7 -3,-2.6 -5.4,-4.2" fill="#fff" stroke="#000" stroke-width="1.2"/><polygon points="-5.4,-1.4 11,-5.8 11,-0.8 -3,3.6 -5.4,2" fill="#fff" stroke="#000" stroke-width="1.2"/><polygon points="-5.4,4.8 11,0.4 11,5.4 -3,9.8 -5.4,8.2" fill="#fff" stroke="#000" stroke-width="1.2"/><polyline points="-4,-6.4 11,-10.6" fill="none" stroke="#888" stroke-width="1.4"/><polyline points="-4,-0.2 11,-4.4" fill="none" stroke="#888" stroke-width="1.4"/><polyline points="-4,6 11,1.8" fill="none" stroke="#888" stroke-width="1.4"/></g></g><g transform="translate(1345.5 63)"><g clip-path="url(#c24)"><polygon points="-11.6,-4.6 -6.6,-3.4 -2,7.4 -4,7.4" fill="#8c8c8c"/><polygon points="-3.4,-8 3.4,-8 2.6,4.4 0.4,11 -1.6,4.4" fill="#d8d8d8" stroke="#000" stroke-width="1"/><ellipse cx="0" cy="-10" rx="5.6" ry="1.6" fill="#555" stroke="#000" stroke-width="0.9"/><polyline points="-0.6,-7 -0.4,8" fill="none" stroke="#555" stroke-width="0.8"/><polyline points="1.6,-7 1.2,5" fill="none" stroke="#fff" stroke-width="1"/></g></g><g transform="translate(1377.5 63)"><g clip-path="url(#c24)"><polygon points="-10,3.4 -2,0.4 9.6,3 9.6,5.6 0.6,10.8 -10,6.4" fill="#e4e4e4" stroke="#666" stroke-width="0.9"/><polyline points="-10,3.4 0.6,8 9.6,3" fill="none" stroke="#666" stroke-width="0.8"/><polyline points="0.6,8 0.6,10.8" fill="none" stroke="#666" stroke-width="0.8"/><polygon points="-3.6,-10.4 1,-11.4 4.4,-10.4 4.4,3.6 0,4.6 -3.6,3.4" fill="#e9e9e9" stroke="#555" stroke-width="1"/><polyline points="0,-9 0,4.6" fill="none" stroke="#555" stroke-width="0.8"/><polyline points="-3.6,-10.4 0,-9.2 4.4,-10.4" fill="none" stroke="#555" stroke-width="0.8"/></g></g><g transform="translate(1409.5 63)"><g clip-path="url(#c24)"><polyline points="-9,5.4 9.6,5.4" fill="none" stroke="#888" stroke-width="1"/><polygon points="-10.6,-9.8 -8,-11.6 3,3.8 0.4,5.6" fill="#fff" stroke="#000" stroke-width="1.1"/><polygon points="7.6,-8.8 10.6,-6.8 -5.4,9.6 -8,6.4" fill="#fff" stroke="#000" stroke-width="1.1"/><polyline points="-8.8,-9.6 1,4" fill="none" stroke="#ff1414" stroke-width="0.9" stroke-dasharray="1.6 1"/><polyline points="8.4,-6.6 -5.4,7.4" fill="none" stroke="#ff1414" stroke-width="0.9" stroke-dasharray="1.6 1"/><circle cx="-6.6" cy="8" r="1.8" fill="#fff" stroke="#ff1414" stroke-width="1"/></g></g><g transform="translate(1441.5 63)"><g clip-path="url(#c24)"><polyline points="-10.6,-7.6 -6.6,-7.6 -6.6,-4.6 -2.6,-4.6 -2.6,-1.6 1.4,-1.6 1.4,0.6 5,0.6" fill="none" stroke="#000" stroke-width="1.2"/><polyline points="-10.6,5 -6.6,5 -6.6,2.4 -2.6,2.4 -2.6,0.4" fill="none" stroke="#888" stroke-width="1.6"/><polyline points="-11,-4.6 2,1.6 13,-2.4" fill="none" stroke="#000" stroke-width="1.1"/><polyline points="2,1.6 -10.6,10.8 13,-0.4" fill="none" stroke="#000" stroke-width="1.1"/><polyline points="1,0.8 5.4,0.8" fill="none" stroke="#000" stroke-width="2"/></g></g><g transform="translate(1473.5 63)"><g clip-path="url(#c24)"><polygon points="-12,11.6 -12,7 -3,-9 12,-11.6 12,11.6" fill="#7a7a7a"/><polygon points="-12,8.6 -10,5 -2.6,-9.6 2,-11.6 4.6,-11.6 -4,7 -9,11.6 -12,11.6" fill="#ddd" stroke="#333" stroke-width="0.8"/><polygon points="-3,9 6.4,-11.6 11.6,-11.6 12,-8 3,9 0,11.6" fill="#c4c4c4" stroke="#333" stroke-width="0.8"/><polyline points="-7,7 2.6,-11" fill="none" stroke="#333" stroke-width="1.6"/><polyline points="0.4,6 9,-11" fill="none" stroke="#555" stroke-width="1.4"/><polyline points="-1,-1 1,-1.6" fill="none" stroke="#fff" stroke-width="1.6"/><polyline points="0.6,-4.4 2.6,-5" fill="none" stroke="#fff" stroke-width="1.6"/><polyline points="2.2,-7.8 4.2,-8.4" fill="none" stroke="#fff" stroke-width="1.6"/><polyline points="-2.6,2.4 -0.6,1.8" fill="none" stroke="#fff" stroke-width="1.6"/><polygon points="-12,11.6 -12,9.4 -6,11.6" fill="#fff"/></g></g><g transform="translate(1505.5 63)"><g clip-path="url(#c24)"><polygon points="-11,6 -4,3 5,5 -3,9.6" fill="none" stroke="#888" stroke-width="1.4"/><polygon points="-6.4,-7 6.4,-11 6.4,2 -6.4,6" fill="none" stroke="#6e6e6e" stroke-width="3.2"/><polygon points="-6.4,-7 6.4,-11 6.4,2 -6.4,6" fill="none" stroke="#c4c4c4" stroke-width="1.0"/></g></g><g transform="translate(1537.5 63)"><g clip-path="url(#c24)"><polygon points="-11.4,5.6 -5.4,3.4 -2,10 -4,11" fill="#999"/><path d="M-4.6,10.6 L-4.6,-5 C-4.6,-7 -3,-8 -1,-8.6 L7.6,-11 L7.6,6" fill="none" stroke="#7a7a7a" stroke-width="3.2" stroke-linejoin="round"/><path d="M-4.6,10.6 L-4.6,-5 C-4.6,-7 -3,-8 -1,-8.6 L7.6,-11 L7.6,6" fill="none" stroke="#d0d0d0" stroke-width="0.9" stroke-linejoin="round"/></g></g><g transform="translate(1569.5 63)"><g clip-path="url(#c24)"><polygon points="-12,-11.6 12,-11.6 12,0 -8,11.6 -12,11.6" fill="#d9d9d9"/><polygon points="-8.6,-6 -5,-7 -5,10 -8.6,11.6" fill="#fff" stroke="#000" stroke-width="0.8"/><polygon points="-5,-7 -2.4,-7.8 -2.4,9 -5,10" fill="#000"/><polygon points="-2.4,-7.8 1.6,-9 1.6,7 -2.4,9" fill="#9ba3d6" stroke="#000" stroke-width="0.7"/><polygon points="1.6,-9 9.6,-11.6 9.6,2.6 1.6,7" fill="#1a1a1a" stroke="#000" stroke-width="0.7"/><rect x="3" y="-7" width="2.2" height="2.6" fill="#9ba3d6"/><rect x="6.4" y="-8.2" width="2.2" height="2.6" fill="#9ba3d6"/><rect x="3" y="-2.6" width="2.2" height="2.6" fill="#9ba3d6"/><rect x="6.4" y="-3.8" width="2.2" height="2.6" fill="#9ba3d6"/><rect x="3" y="1.6" width="2.2" height="2.6" fill="#9ba3d6"/></g></g><g transform="translate(1601.5 63)"><g clip-path="url(#c24)"><polygon points="-11.4,-1 -8,-2 -8,4 -11.4,3" fill="#aaa" stroke="#666" stroke-width="0.7"/><polygon points="-8,-11 11.6,-11.6 11.6,6 -5,11.4 -8,9" fill="#c9c9c9" stroke="#444" stroke-width="1"/><polyline points="-3.6,-11 -3.6,8.72" fill="none" stroke="#000" stroke-width="1.6"/><polyline points="1,-11 1,7.8" fill="none" stroke="#000" stroke-width="1.6"/><polyline points="5.6,-11 5.6,6.88" fill="none" stroke="#000" stroke-width="1.6"/><polyline points="-8,-4.4 11.6,-5.4" fill="none" stroke="#000" stroke-width="1.5"/><polyline points="-8,2.2 11.6,0.4" fill="none" stroke="#000" stroke-width="1.5"/></g></g><g transform="translate(1633.5 63)"><g clip-path="url(#c24)"><g clip-path="url(#c12)"><rect x="-12" y="-11.6" width="24" height="23.2" fill="#fff"/><polyline points="-14,0 -2,-11.6" fill="none" stroke="#000" stroke-width="1.5"/><polyline points="-11.4,1.9 0.6,-9.7" fill="none" stroke="#000" stroke-width="1.5"/><polyline points="-8.8,3.8 3.2,-7.8" fill="none" stroke="#000" stroke-width="1.5"/><polyline points="-6.2,5.7 5.8,-5.9" fill="none" stroke="#000" stroke-width="1.5"/><polyline points="-3.6,7.6 8.4,-4" fill="none" stroke="#000" stroke-width="1.5"/><polyline points="-1,9.5 11,-2.1" fill="none" stroke="#000" stroke-width="1.5"/><polyline points="1.6,11.4 13.6,-0.2" fill="none" stroke="#000" stroke-width="1.5"/><polyline points="4.2,13.3 16.2,1.7" fill="none" stroke="#000" stroke-width="1.5"/><polyline points="6.8,15.2 18.8,3.6" fill="none" stroke="#000" stroke-width="1.5"/><polyline points="9.4,17.1 21.4,5.5" fill="none" stroke="#000" stroke-width="1.5"/><polyline points="12,19 24,7.4" fill="none" stroke="#000" stroke-width="1.5"/><polyline points="14.6,20.9 26.6,9.3" fill="none" stroke="#000" stroke-width="1.5"/><polyline points="-12,-10 12,1" fill="none" stroke="#222" stroke-width="1.4"/><polyline points="-12,-5.4 12,5.6" fill="none" stroke="#222" stroke-width="1.4"/><polyline points="-12,-0.8 12,10.2" fill="none" stroke="#222" stroke-width="1.4"/><polyline points="-12,3.8 12,14.8" fill="none" stroke="#222" stroke-width="1.4"/><polyline points="-12,8.4 12,19.4" fill="none" stroke="#222" stroke-width="1.4"/><polyline points="-13,-1 -1,-12.6" fill="none" stroke="#888" stroke-width="0.6"/><polyline points="-10.4,0.9 1.6,-10.7" fill="none" stroke="#888" stroke-width="0.6"/><polyline points="-7.8,2.8 4.2,-8.8" fill="none" stroke="#888" stroke-width="0.6"/><polyline points="-5.2,4.7 6.8,-6.9" fill="none" stroke="#888" stroke-width="0.6"/><polyline points="-2.6,6.6 9.4,-5" fill="none" stroke="#888" stroke-width="0.6"/><polyline points="0,8.5 12,-3.1" fill="none" stroke="#888" stroke-width="0.6"/><polyline points="2.6,10.4 14.6,-1.2" fill="none" stroke="#888" stroke-width="0.6"/><polyline points="5.2,12.3 17.2,0.7" fill="none" stroke="#888" stroke-width="0.6"/><polyline points="7.8,14.2 19.8,2.6" fill="none" stroke="#888" stroke-width="0.6"/><polyline points="10.4,16.1 22.4,4.5" fill="none" stroke="#888" stroke-width="0.6"/><polyline points="13,18 25,6.4" fill="none" stroke="#888" stroke-width="0.6"/><polyline points="15.6,19.9 27.6,8.3" fill="none" stroke="#888" stroke-width="0.6"/></g></g></g><g transform="translate(1665.5 63)"><g clip-path="url(#c24)"><rect x="-12" y="-11.6" width="24" height="23.2" fill="#8a8a8a" rx="2"/><polygon points="-5.6,-7.4 12,-12.4 12,-8.4 -1,-3" fill="#fff"/><polygon points="-4.4,-1.2 12,-6.2 12,-2.2 -0.4,3.2" fill="#fff"/><polygon points="-3.2,5 12,0 12,4 0.2,9.4" fill="#fff"/><polyline points="-5.6,-7 -1,-2.8 12,-8" fill="none" stroke="#444" stroke-width="0.8"/><polyline points="-4.4,-0.8 -0.4,3.4 12,-1.8" fill="none" stroke="#444" stroke-width="0.8"/><polyline points="-3.2,5.4 0.2,9.6 12,4.4" fill="none" stroke="#444" stroke-width="0.8"/></g></g><g transform="translate(1697.5 63)"><g clip-path="url(#c24)"><polygon points="-11.6,-2 2,-11.6 12,-11.6 12,11.6 3,11.6" fill="#fff"/><polyline points="-11.6,-2 2,-11.4" fill="none" stroke="#000" stroke-width="2"/><polyline points="-11.6,-2 3.6,11.4" fill="none" stroke="#000" stroke-width="2"/><polyline points="-6,-2 0.6,-7 0.6,4" fill="none" stroke="#000" stroke-width="1.6"/><polygon points="-6,-2 0.6,-6 0.6,3.4" fill="#7d7d6d"/><path d="M2.6,-10 C8,-12 12,-8 11,-2 M3.6,-4 C8,-6 11,-2 11,4 M5,2 L11,9 M4,-10 L11,-1 M2,4 L10,0" fill="none" stroke="#000" stroke-width="1.7"/><polygon points="5,-7 9,-8 10,-4" fill="#7d7d6d"/></g></g><g transform="translate(1729.5 63)"><g clip-path="url(#c24)"><polygon points="-12,0.6 4.4,-11.6 7.4,-11.6 -9,2.6" fill="#8c8c8c"/><polygon points="-6.6,3 6.4,-11.6 9.4,-11.6 -3.6,5" fill="#9c9c9c"/><polygon points="-1.2,5.4 8.4,-11.6 11.4,-11.6 1.8,7.4" fill="#8c8c8c"/><polygon points="4.2,7.8 10.4,-11.6 13.4,-11.6 7.2,9.8" fill="#a6a6a6"/><polyline points="-10.6,1.6 6,-11.6" fill="none" stroke="#555" stroke-width="0.9"/><polyline points="-5.2,4 8,-11.6" fill="none" stroke="#555" stroke-width="0.9"/><polyline points="0.2,6.4 10,-11.6" fill="none" stroke="#555" stroke-width="0.9"/><polyline points="5.6,8.8 12,-11.6" fill="none" stroke="#555" stroke-width="0.9"/><polyline points="9.4,4 10.4,11" fill="none" stroke="#888" stroke-width="1.6"/></g></g><g transform="translate(1761.5 63)"><g clip-path="url(#c24)"><polygon points="-12,-11.6 12,-11.6 11,8 -10,11.6" fill="#fff"/><polyline points="-11,9 -3,-11.4" fill="none" stroke="#000" stroke-width="1.5"/><polyline points="-11,7.8 0.4,-11.4" fill="none" stroke="#000" stroke-width="1.5"/><polyline points="-11,6.6 3.8,-11.4" fill="none" stroke="#000" stroke-width="1.5"/><polyline points="-11,5.4 7.2,-11.4" fill="none" stroke="#000" stroke-width="1.5"/><polyline points="-11,4.2 10.6,-11.4" fill="none" stroke="#000" stroke-width="1.5"/><polyline points="-12,-10 2,-11" fill="none" stroke="#000" stroke-width="1.2"/><polyline points="-12,-6.8 1,-9.6" fill="none" stroke="#000" stroke-width="1.2"/><polyline points="-12,-3.6 0,-8.2" fill="none" stroke="#000" stroke-width="1.2"/><polyline points="-12,-0.4 -1,-6.8" fill="none" stroke="#000" stroke-width="1.2"/><polyline points="2,-11 5,8" fill="none" stroke="#333" stroke-width="1.3"/><polyline points="5,-11 7.2,6.6" fill="none" stroke="#333" stroke-width="1.3"/><polyline points="8,-11 9.4,5.2" fill="none" stroke="#333" stroke-width="1.3"/><polyline points="11,-11 11.6,3.8" fill="none" stroke="#333" stroke-width="1.3"/></g></g><g transform="translate(1793.5 63)"><g clip-path="url(#c24)"><polygon points="-11,1.6 0,-10.6 11.6,-1 1,11" fill="#fff" stroke="#333" stroke-width="1.1"/><polyline points="0,-10.6 0.4,-3 11.6,-1" fill="none" stroke="#777" stroke-width="0.8"/><polyline points="0.4,-3 -11,1.6" fill="none" stroke="#777" stroke-width="0.8"/><polygon points="-7.4,3 -1.6,-2 -1.6,6.4 -4.6,7.4" fill="#fff" stroke="#333" stroke-width="0.9"/><polygon points="-1.6,-2 2.6,0 2.6,8 -1.6,6.4" fill="#bbb" stroke="#333" stroke-width="0.8"/></g></g><g transform="translate(1825.5 63)"><g clip-path="url(#c24)"><polygon points="-9,-11.6 8,-11.6 8,4 -9,-2" fill="#ddd"/><polyline points="-9,-2 -6,1.6 -3,0.6 0,4 4,3" fill="none" stroke="#000" stroke-width="1.2"/><polyline points="-8,-4 -2,-11.6" fill="none" stroke="#fff" stroke-width="1.4"/><polyline points="-4.8,-3 1.2,-10.6" fill="none" stroke="#fff" stroke-width="1.4"/><polyline points="-1.6,-2 4.4,-9.6" fill="none" stroke="#fff" stroke-width="1.4"/><polyline points="1.6,-1 7.6,-8.6" fill="none" stroke="#fff" stroke-width="1.4"/></g></g></g><g id="tb2i"><line x1="40.5" y1="82" x2="40.5" y2="117" stroke="#dcdce6" stroke-width="1.2"/><rect x="43" y="90" width="1" height="1" fill="#b4b4bd"/><rect x="46" y="90" width="1" height="1" fill="#b4b4bd"/><rect x="43" y="93" width="1" height="1" fill="#b4b4bd"/><rect x="46" y="93" width="1" height="1" fill="#b4b4bd"/><rect x="43" y="96" width="1" height="1" fill="#b4b4bd"/><rect x="46" y="96" width="1" height="1" fill="#b4b4bd"/><rect x="43" y="99" width="1" height="1" fill="#b4b4bd"/><rect x="46" y="99" width="1" height="1" fill="#b4b4bd"/><rect x="43" y="102" width="1" height="1" fill="#b4b4bd"/><rect x="46" y="102" width="1" height="1" fill="#b4b4bd"/><rect x="43" y="105" width="1" height="1" fill="#b4b4bd"/><rect x="46" y="105" width="1" height="1" fill="#b4b4bd"/><text x="51.6" y="105.7" font-family="Liberation Sans, sans-serif" font-size="19.6" font-weight="normal" fill="#000" text-anchor="start" textLength="30.6" lengthAdjust="spacingAndGlyphs">A-B</text><circle cx="97.9" cy="97.1" r="5.7" fill="none" stroke="#c9484c" stroke-width="1.5"/><line x1="102" y1="101.6" x2="106.9" y2="107.1" stroke="#c9484c" stroke-width="1.7"/><path d="M118.4,101.6 L131,89 C132,88 133,87.6 134.4,87.2 L141.6,85.6 C143.4,85.3 144.2,86.4 144,88 L142.6,95.4 C142.3,96.8 141.8,97.8 140.8,98.8 L128.2,111.4 Z" fill="#000"/><circle cx="138.6" cy="91.4" r="2.1" fill="#f0f0f5"/><path d="M125,100.8 L135,100.8 M130,95.8 L130,105.8" fill="none" stroke="#fff" stroke-width="2.6"/><polygon points="158.4,90.2 158.4,104.6 161.8,101.4 164.2,107 166.4,106 164,100.6 168.4,100.2" fill="#000"/><path d="M184.2,91 C190,85.4 199,85.4 205.4,91" fill="none" stroke="#000" stroke-width="1.8"/><polygon points="181.4,88.2 187.8,89.6 183,94" fill="#000"/><polygon points="208.2,88.2 201.8,89.6 206.6,94" fill="#000"/><polygon points="182.6,97.4 192,104.2 182.6,111" fill="#000"/><polygon points="207.4,97.4 198,104.2 207.4,111" fill="#000"/><line x1="194.9" y1="94.6" x2="194.9" y2="110.4" stroke="#000" stroke-width="2"/><path d="M216.4,99.4 C215.6,91 222,86.6 228,86.6 C232,86.6 235,88.6 237,91.6" fill="none" stroke="#000" stroke-width="2.1"/><path d="M239.6,97.6 C240.4,106 234,110.6 228,110.6 C224,110.6 221,108.6 219,105.6" fill="none" stroke="#000" stroke-width="2.1"/><polygon points="212.4,97.8 221.2,97.4 216.6,104.6" fill="#000"/><polygon points="243.4,99.4 234.8,99.8 239.4,92.6" fill="#000"/><line x1="246.8" y1="89" x2="246.8" y2="109" stroke="#8c8c8c" stroke-width="1.5"/><polygon points="255.4,88.6 264.4,84.6 264.4,105.8 255.4,111.6" fill="#cfcfcf" stroke="#000" stroke-width="1"/><polygon points="264.4,84.6 273.6,88.6 273.6,111.6 264.4,105.8" fill="#fff" stroke="#000" stroke-width="1"/><path d="M259.2,99 C262.4,95.4 266.6,95.4 269.6,99" fill="none" stroke="#ff1414" stroke-width="1.6"/><rect x="285.4" y="85.4" width="8.4" height="26" fill="#cfcfcf" stroke="#000" stroke-width="1.1"/><rect x="293.8" y="94.4" width="13.8" height="8" fill="#fff" stroke="#000" stroke-width="1.1"/><rect x="293.4" y="94.8" width="2" height="7.2" fill="#ff1414"/><rect x="317.4" y="85.4" width="8.2" height="26" fill="#cfcfcf" stroke="#000" stroke-width="1.1"/><rect x="321.6" y="94.4" width="18" height="8" fill="#fff" stroke="#000" stroke-width="1.1"/><rect x="325" y="94.8" width="2" height="7.2" fill="#ff1414"/><line x1="348.8" y1="89" x2="348.8" y2="109" stroke="#8c8c8c" stroke-width="1.5"/><rect x="353.4" y="87.4" width="8.2" height="22.8" fill="#cfcfcf" stroke="#000" stroke-width="1.1"/><rect x="361.6" y="87.4" width="8" height="22.8" fill="#cfcfcf" stroke="#000" stroke-width="1.1"/><rect x="369.6" y="94.4" width="5" height="15.8" fill="#fff" stroke="#000" stroke-width="1.1"/><rect x="374.6" y="94.4" width="5" height="15.8" fill="#fff" stroke="#000" stroke-width="1.1"/><line x1="386.8" y1="89" x2="386.8" y2="109" stroke="#8c8c8c" stroke-width="1.5"/><path d="M415.04,95.87 L419.14,95.88 L419.14,101.32 L415.04,101.33 L413.97,103.92 L416.86,106.82 L413.02,110.66 L410.12,107.77 L407.53,108.84 L407.52,112.94 L402.08,112.94 L402.07,108.84 L399.48,107.77 L396.58,110.66 L392.74,106.82 L395.63,103.92 L394.56,101.33 L390.46,101.32 L390.46,95.88 L394.56,95.87 L395.63,93.28 L392.74,90.38 L396.58,86.54 L399.48,89.43 L402.07,88.36 L402.08,84.26 L407.52,84.26 L407.53,88.36 L410.12,89.43 L413.02,86.54 L416.86,90.38 L413.97,93.28 Z M399,98.6 a5.8,5.8 0 1 0 11.6,0 a5.8,5.8 0 1 0 -11.6,0 Z" fill="#000" fill-rule="evenodd"/><circle cx="404.8" cy="98.6" r="2.2" fill="#000"/><rect x="422.4" y="87.4" width="29.4" height="22.8" fill="#fff" stroke="#000" stroke-width="1.2"/><rect x="423" y="88" width="28.2" height="3.4" fill="#bdbdbd"/><path d="M422.4,91.6 H451.8 M422.4,96.2 H451.8 M422.4,100.8 H451.8 M422.4,105.4 H451.8" fill="none" stroke="#888" stroke-width="0.8"/><path d="M431.6,87.4 V110.2 M441.4,87.4 V110.2" fill="none" stroke="#888" stroke-width="0.9"/><line x1="456.8" y1="89" x2="456.8" y2="109" stroke="#8c8c8c" stroke-width="1.5"/><path d="M462,98.6 H469.4 M479.4,98.6 H487 M474.4,86 V93.6 M474.4,103.6 V111.4" fill="none" stroke="#000" stroke-width="1.3"/><polygon points="460,98.6 464.6,95.8 464.6,101.4" fill="#000"/><polygon points="489,98.6 484.4,95.8 484.4,101.4" fill="#000"/><polygon points="474.4,84 471.6,88.8 477.2,88.8" fill="#000"/><polygon points="474.4,113.4 471.6,108.6 477.2,108.6" fill="#000"/><circle cx="474.4" cy="98.6" r="2.6" fill="#ff1414"/><line x1="494.8" y1="89" x2="494.8" y2="109" stroke="#8c8c8c" stroke-width="1.5"/><rect x="498.4" y="84.4" width="30" height="30" fill="#dbeaf8" stroke="#5aa2dc" stroke-width="1" rx="3"/><rect x="501.8" y="90.8" width="22.8" height="15.8" fill="#e4e4e4" stroke="#000" stroke-width="2.2"/><line x1="532.6" y1="89" x2="532.6" y2="109" stroke="#8c8c8c" stroke-width="1.5"/><rect x="536.4" y="89.4" width="11" height="18.6" fill="#cfcfcf" stroke="#777" stroke-width="0.8"/><rect x="550.2" y="89.4" width="15.6" height="9.4" fill="#cfcfcf" stroke="#777" stroke-width="0.8"/><rect x="550.2" y="101.4" width="15.6" height="6.6" fill="#cfcfcf" stroke="#777" stroke-width="0.8"/><circle cx="582.9" cy="98.6" r="11.3" fill="none" stroke="#c0514f" stroke-width="1.2"/><path d="M575.4,98.6 H590.4 M582.9,91 V106.2" fill="none" stroke="#c0514f" stroke-width="1.2"/><polygon points="574,98.6 577.4,96.2 577.4,101" fill="#c0514f"/><polygon points="591.8,98.6 588.4,96.2 588.4,101" fill="#c0514f"/><polygon points="582.9,89.6 580.5,93 585.3,93" fill="#c0514f"/><polygon points="582.9,107.6 580.5,104.2 585.3,104.2" fill="#c0514f"/><text x="599.6" y="103.8" font-family="Liberation Sans, sans-serif" font-size="13.8" font-weight="bold" fill="#000" text-anchor="start" textLength="30" lengthAdjust="spacingAndGlyphs">.DXF</text><polygon points="638.6,96 638.6,84.6 649.4,84.6 655,90 655,96" fill="#fff" stroke="#000" stroke-width="1.2"/><polyline points="649.4,84.6 649.4,90 655,90" fill="none" stroke="#000" stroke-width="1"/><rect x="634.6" y="94.6" width="24.6" height="13" fill="#b5b5b5" stroke="#000" stroke-width="1.2"/><rect x="638.6" y="102.6" width="17" height="11.4" fill="#fff" stroke="#000" stroke-width="1.2"/><path d="M641,106 H653 M641,108.6 H653 M641,111.2 H653" fill="none" stroke="#000" stroke-width="1"/><path d="M652.4,97.4 h1.2 M655,97.4 h1.2" fill="none" stroke="#000" stroke-width="1.2"/><line x1="666.8" y1="89" x2="666.8" y2="109" stroke="#8c8c8c" stroke-width="1.5"/><polygon points="673.6,92.6 680,88.4 697.6,88.4 690.6,92.6" fill="#cfcfcf" stroke="#000" stroke-width="1.1"/><rect x="673.6" y="97.4" width="16.6" height="12.4" fill="#cfcfcf" stroke="#000" stroke-width="1.2"/><polygon points="693.6,96.4 697.6,92.4 697.6,103.8 693.6,108.4" fill="#cfcfcf" stroke="#000" stroke-width="1.1"/><line x1="705" y1="98.4" x2="724" y2="98.4" stroke="#000" stroke-width="1.6"/><polygon points="728.4,98.4 722.6,94.6 722.6,102.2" fill="#000"/><line x1="736.6" y1="89" x2="736.6" y2="109" stroke="#8c8c8c" stroke-width="1.5"/><polygon points="751,88.4 758,88.4 758,99.6 763.4,99.6 754.6,108.4 746,99.6 751,99.6" fill="#c0575a"/><rect x="776.6" y="90.6" width="20.4" height="17" fill="none" stroke="#222" stroke-width="1.2" rx="3"/><polygon points="783.6,94.6 783.6,102.8 790.6,98.7" fill="#000"/><line x1="805" y1="82" x2="805" y2="116" stroke="#dcdce6" stroke-width="1.5"/><rect x="809" y="90" width="1" height="1" fill="#b4b4bd"/><rect x="812" y="90" width="1" height="1" fill="#b4b4bd"/><rect x="809" y="93" width="1" height="1" fill="#b4b4bd"/><rect x="812" y="93" width="1" height="1" fill="#b4b4bd"/><rect x="809" y="96" width="1" height="1" fill="#b4b4bd"/><rect x="812" y="96" width="1" height="1" fill="#b4b4bd"/><rect x="809" y="99" width="1" height="1" fill="#b4b4bd"/><rect x="812" y="99" width="1" height="1" fill="#b4b4bd"/><rect x="809" y="102" width="1" height="1" fill="#b4b4bd"/><rect x="812" y="102" width="1" height="1" fill="#b4b4bd"/><rect x="809" y="105" width="1" height="1" fill="#b4b4bd"/><rect x="812" y="105" width="1" height="1" fill="#b4b4bd"/><g transform="translate(834 98.4)"><polygon points="-13.6,-4.8 -3,-12 13,-7.6 13,8.4 1.4,14 -13.6,9.6" fill="none" stroke="#b5b5b5" stroke-width="0.8"/><polyline points="-13.6,-4.8 1.4,-1 13,-7.6" fill="none" stroke="#b5b5b5" stroke-width="0.8"/><polyline points="1.4,-1 1.4,14" fill="none" stroke="#b5b5b5" stroke-width="0.8"/><circle cx="-13.6" cy="-4.8" r="0.9" fill="#aaa"/><circle cx="-3" cy="-12" r="0.9" fill="#aaa"/><circle cx="13" cy="-7.6" r="0.9" fill="#aaa"/><circle cx="13" cy="8.4" r="0.9" fill="#aaa"/><circle cx="1.4" cy="14" r="0.9" fill="#aaa"/><circle cx="-13.6" cy="9.6" r="0.9" fill="#aaa"/><circle cx="-8" cy="-8.4" r="0.9" fill="#aaa"/><circle cx="5" cy="-9.8" r="0.9" fill="#aaa"/><circle cx="13" cy="0.4" r="0.9" fill="#aaa"/><circle cx="-13.6" cy="2.4" r="0.9" fill="#aaa"/><circle cx="-6" cy="11.8" r="0.9" fill="#aaa"/><circle cx="7.4" cy="11.2" r="0.9" fill="#aaa"/></g><polygon points="826.18,94.42 833.97,91.57 841.57,94.04 833.78,97.08" fill="#9a9a9a" stroke="#8d8d8d" stroke-width="0.9"/><polygon points="826.18,94.42 833.78,97.08 833.78,107.15 826.18,103.92" fill="#fff" stroke="#8d8d8d" stroke-width="1"/><polygon points="833.78,97.08 841.57,94.04 841.57,103.73 833.78,107.15" fill="#c9c9c9" stroke="#8d8d8d" stroke-width="1"/><circle cx="827.6" cy="100.6" r="0.9" fill="#8d8d8d"/><path d="M865,85 V92 M865,106 V112.4 M851.6,95.4 L858,97 M872,101 L878,102.4 M853.6,103 L858.4,101 M872.6,95.6 L876.6,94" fill="none" stroke="#777" stroke-width="1.6"/><polygon points="856.8,94.4 865,91.4 873,94 864.8,97.2" fill="#9a9a9a" stroke="#8d8d8d" stroke-width="0.9"/><polygon points="856.8,94.4 864.8,97.2 864.8,107.8 856.8,104.4" fill="#fff" stroke="#8d8d8d" stroke-width="1"/><polygon points="864.8,97.2 873,94 873,104.2 864.8,107.8" fill="#c9c9c9" stroke="#8d8d8d" stroke-width="1"/><path d="M858.6,100.6 L862.6,99.4 M869,99.6 L872.6,100.6" fill="none" stroke="#999" stroke-width="1.4"/><path d="M883.4,96 L889,97.4 M903.6,100.6 L910,102.2" fill="none" stroke="#777" stroke-width="1.6"/><polygon points="888.8,94.4 897,91.4 905,94 896.8,97.2" fill="#9a9a9a" stroke="#8d8d8d" stroke-width="0.9"/><polygon points="888.8,94.4 896.8,97.2 896.8,107.8 888.8,104.4" fill="#fff" stroke="#8d8d8d" stroke-width="1"/><polygon points="896.8,97.2 905,94 905,104.2 896.8,107.8" fill="#c9c9c9" stroke="#8d8d8d" stroke-width="1"/><path d="M901.4,99.6 L905,100.6" fill="none" stroke="#999" stroke-width="1.4"/><path d="M917.6,102.6 L923,100.6 M937.6,95.4 L941,94.2" fill="none" stroke="#999" stroke-width="1.5"/><polygon points="921.4,94.4 929.6,91.4 937.6,94 929.4,97.2" fill="#9a9a9a" stroke="#8d8d8d" stroke-width="0.9"/><polygon points="921.4,94.4 929.4,97.2 929.4,107.8 921.4,104.4" fill="#fff" stroke="#8d8d8d" stroke-width="1"/><polygon points="929.4,97.2 937.6,94 937.6,104.2 929.4,107.8" fill="#c9c9c9" stroke="#8d8d8d" stroke-width="1"/><path d="M922,101.4 L926,99.8" fill="none" stroke="#999" stroke-width="1.4"/><path d="M961,85 V92.6 M961,106 V112.4" fill="none" stroke="#777" stroke-width="1.6"/><polygon points="953,94.4 961.2,91.4 969.2,94 961,97.2" fill="#9a9a9a" stroke="#8d8d8d" stroke-width="0.9"/><polygon points="953,94.4 961,97.2 961,107.8 953,104.4" fill="#fff" stroke="#8d8d8d" stroke-width="1"/><polygon points="961,97.2 969.2,94 969.2,104.2 961,107.8" fill="#c9c9c9" stroke="#8d8d8d" stroke-width="1"/><line x1="980.6" y1="89" x2="980.6" y2="109" stroke="#9c9c9c" stroke-width="1.3"/><polygon points="1003,90.6 1008,88.8 1014,90.4 1014,100.4 1008.6,102.6 1003,100.8" fill="#a8a8a8" stroke="#8d8d8d" stroke-width="0.9"/><polyline points="1003,90.6 1008.6,92.4 1014,90.4" fill="none" stroke="#8d8d8d" stroke-width="0.8"/><polyline points="1008.6,92.4 1008.6,102.6" fill="none" stroke="#8d8d8d" stroke-width="0.8"/><path d="M1001.6,98.4 L997.6,100 M999.6,97.6 L997.6,100 L1000.4,101.4" fill="none" stroke="#999" stroke-width="1"/><rect x="985" y="98.6" width="9.6" height="7.4" fill="#fff" stroke="#8d8d8d" stroke-width="1.1" rx="2.6"/><polygon points="994.2,100.6 997,98.2 997,105.4 994.2,103.8" fill="#fff" stroke="#8d8d8d" stroke-width="1"/><path d="M989.6,106 L987.4,112 M989.6,106 L992.4,112 M989.8,106 V110" fill="none" stroke="#8d8d8d" stroke-width="1"/><line x1="1017.5" y1="82" x2="1017.5" y2="116" stroke="#dcdce6" stroke-width="1.5"/><rect x="1021" y="90" width="1" height="1" fill="#b4b4bd"/><rect x="1024" y="90" width="1" height="1" fill="#b4b4bd"/><rect x="1021" y="93" width="1" height="1" fill="#b4b4bd"/><rect x="1024" y="93" width="1" height="1" fill="#b4b4bd"/><rect x="1021" y="96" width="1" height="1" fill="#b4b4bd"/><rect x="1024" y="96" width="1" height="1" fill="#b4b4bd"/><rect x="1021" y="99" width="1" height="1" fill="#b4b4bd"/><rect x="1024" y="99" width="1" height="1" fill="#b4b4bd"/><rect x="1021" y="102" width="1" height="1" fill="#b4b4bd"/><rect x="1024" y="102" width="1" height="1" fill="#b4b4bd"/><rect x="1021" y="105" width="1" height="1" fill="#b4b4bd"/><rect x="1024" y="105" width="1" height="1" fill="#b4b4bd"/><rect x="1030" y="83.4" width="21" height="2.2" fill="#164a75"/><polygon points="1035.6,85.6 1045.4,85.6 1045.4,89.4 1044,91 1037,91 1035.6,89.4" fill="#1d74b0" stroke="#164a75" stroke-width="0.6"/><polygon points="1036.6,91 1044.4,91 1041.6,100.6 1039.4,100.6" fill="#2b8fd0" stroke="#164a75" stroke-width="0.6"/><polyline points="1036.4,90.6 1044.6,90.6" fill="none" stroke="#0e3454" stroke-width="1.2"/><rect x="1039.4" y="100.6" width="2.2" height="12.4" fill="#555"/><path d="M1038.6,102 h3.8 M1038.6,104 h3.8 M1038.6,106 h3.8 M1038.6,108 h3.8 M1038.6,110 h3.8" fill="none" stroke="#222" stroke-width="0.8"/><text transform="translate(1060 114.2) rotate(-90)" font-family="Liberation Sans, sans-serif" font-size="13.6" font-weight="bold" fill="#ee1c25" textLength="30.5" lengthAdjust="spacingAndGlyphs">ABF_</text><line x1="1064" y1="82" x2="1064" y2="116" stroke="#dcdce6" stroke-width="1.5"/><rect x="1067" y="90" width="1" height="1" fill="#b4b4bd"/><rect x="1070" y="90" width="1" height="1" fill="#b4b4bd"/><rect x="1067" y="93" width="1" height="1" fill="#b4b4bd"/><rect x="1070" y="93" width="1" height="1" fill="#b4b4bd"/><rect x="1067" y="96" width="1" height="1" fill="#b4b4bd"/><rect x="1070" y="96" width="1" height="1" fill="#b4b4bd"/><rect x="1067" y="99" width="1" height="1" fill="#b4b4bd"/><rect x="1070" y="99" width="1" height="1" fill="#b4b4bd"/><rect x="1067" y="102" width="1" height="1" fill="#b4b4bd"/><rect x="1070" y="102" width="1" height="1" fill="#b4b4bd"/><rect x="1067" y="105" width="1" height="1" fill="#b4b4bd"/><rect x="1070" y="105" width="1" height="1" fill="#b4b4bd"/><rect x="1075.6" y="88.4" width="164.6" height="21.2" fill="#fff" stroke="#c2c2cd" stroke-width="1" rx="3"/><polyline points="1083.2,99.6 1086.6,103 1093.4,95" fill="none" stroke="#000" stroke-width="1.7"/><text x="1099.2" y="103.9" font-family="Liberation Sans, sans-serif" font-size="12" font-weight="normal" fill="#2b3a67" text-anchor="start" textLength="54.6" lengthAdjust="spacingAndGlyphs">Untagged</text><polygon points="1225.4,97.4 1233.4,97.4 1229.4,101.6" fill="#777"/><line x1="1243.8" y1="82" x2="1243.8" y2="116" stroke="#dcdce6" stroke-width="1.5"/><rect x="1247" y="90" width="1" height="1" fill="#b4b4bd"/><rect x="1250" y="90" width="1" height="1" fill="#b4b4bd"/><rect x="1247" y="93" width="1" height="1" fill="#b4b4bd"/><rect x="1250" y="93" width="1" height="1" fill="#b4b4bd"/><rect x="1247" y="96" width="1" height="1" fill="#b4b4bd"/><rect x="1250" y="96" width="1" height="1" fill="#b4b4bd"/><rect x="1247" y="99" width="1" height="1" fill="#b4b4bd"/><rect x="1250" y="99" width="1" height="1" fill="#b4b4bd"/><rect x="1247" y="102" width="1" height="1" fill="#b4b4bd"/><rect x="1250" y="102" width="1" height="1" fill="#b4b4bd"/><rect x="1247" y="105" width="1" height="1" fill="#b4b4bd"/><rect x="1250" y="105" width="1" height="1" fill="#b4b4bd"/><text x="1255.4" y="101" font-family="Liberation Serif, serif" font-size="23" font-style="italic" font-weight="bold" fill="#1b1ba6">C</text><text x="1272" y="106.6" font-family="Liberation Serif, serif" font-size="22" font-style="italic" font-weight="bold" fill="#1b1ba6">z</text><rect x="1256.2" y="108.6" width="30" height="5.8" fill="#ff10bd"/><line x1="1290.8" y1="89" x2="1290.8" y2="109" stroke="#8c8c8c" stroke-width="1.6"/><line x1="1295.4" y1="82" x2="1295.4" y2="116" stroke="#dcdce6" stroke-width="1.5"/><rect x="1299" y="90" width="1" height="1" fill="#b4b4bd"/><rect x="1302" y="90" width="1" height="1" fill="#b4b4bd"/><rect x="1299" y="93" width="1" height="1" fill="#b4b4bd"/><rect x="1302" y="93" width="1" height="1" fill="#b4b4bd"/><rect x="1299" y="96" width="1" height="1" fill="#b4b4bd"/><rect x="1302" y="96" width="1" height="1" fill="#b4b4bd"/><rect x="1299" y="99" width="1" height="1" fill="#b4b4bd"/><rect x="1302" y="99" width="1" height="1" fill="#b4b4bd"/><rect x="1299" y="102" width="1" height="1" fill="#b4b4bd"/><rect x="1302" y="102" width="1" height="1" fill="#b4b4bd"/><rect x="1299" y="105" width="1" height="1" fill="#b4b4bd"/><rect x="1302" y="105" width="1" height="1" fill="#b4b4bd"/><path d="M1313.4,90.4 C1319,86.6 1328,86.4 1333.6,88.6 C1335,95 1333,103 1327.4,108.4 C1325.6,110 1324,110 1322.4,108.6 C1317.6,105 1313.4,102 1312.4,98.4 C1313.6,96 1314.4,93.4 1313.4,90.4 Z" fill="#f2cbc7" stroke="#000" stroke-width="1.1"/><path d="M1320,89 C1319.6,96 1319.4,101 1320.4,106 M1325.4,88.4 C1326,94 1324,99 1326.4,104 M1330.6,89.4 C1331,94 1329.6,98 1330.4,101" fill="none" stroke="#5a3a38" stroke-width="0.8"/><path d="M1349.6,98 C1350.6,84 1362.4,84 1362.2,102.4" fill="none" stroke="#f0746a" stroke-width="1.2"/><polygon points="1343.6,98.6 1352.4,97.6 1353.2,105.8 1343.6,106.4" fill="#22a85e" stroke="#0c6b38" stroke-width="0.9"/><ellipse cx="1361.8" cy="105.6" rx="4.4" ry="4.2" fill="#f7b500" stroke="#222" stroke-width="0.9"/><polygon points="1376,102 1380.6,93.4 1389.4,87 1397.8,100 1396.4,106 1386.4,111.4 1377.6,108" fill="none" stroke="#109a18" stroke-width="1.1"/><path d="M1380.6,93.4 L1384.6,96 L1389.4,87 M1384.6,96 L1382.4,103 L1377.6,108 M1382.4,103 L1388.4,104.4 L1386.4,111.4 M1388.4,104.4 L1391.4,100.6 L1397.8,100 M1391.4,100.6 L1384.6,96 M1376,102 L1382.4,103 M1388.4,104.4 L1396.4,106" fill="none" stroke="#109a18" stroke-width="0.9"/><line x1="1406.2" y1="82" x2="1406.2" y2="116" stroke="#dcdce6" stroke-width="1.5"/><rect x="1409" y="90" width="1" height="1" fill="#b4b4bd"/><rect x="1412" y="90" width="1" height="1" fill="#b4b4bd"/><rect x="1409" y="93" width="1" height="1" fill="#b4b4bd"/><rect x="1412" y="93" width="1" height="1" fill="#b4b4bd"/><rect x="1409" y="96" width="1" height="1" fill="#b4b4bd"/><rect x="1412" y="96" width="1" height="1" fill="#b4b4bd"/><rect x="1409" y="99" width="1" height="1" fill="#b4b4bd"/><rect x="1412" y="99" width="1" height="1" fill="#b4b4bd"/><rect x="1409" y="102" width="1" height="1" fill="#b4b4bd"/><rect x="1412" y="102" width="1" height="1" fill="#b4b4bd"/><rect x="1409" y="105" width="1" height="1" fill="#b4b4bd"/><rect x="1412" y="105" width="1" height="1" fill="#b4b4bd"/><rect x="1418.2" y="92.2" width="4.4" height="14.4" fill="#9a9a9a"/><rect x="1440.6" y="92.2" width="6.8" height="14.4" fill="#9a9a9a"/><polygon points="1425,87.8 1436.2,87.8 1443.8,111.4 1424.4,111.4" fill="#fff" stroke="#e03c3c" stroke-width="1.4"/><polygon points="1427.6,92.2 1435.6,92.2 1439.6,107.2 1427.4,107.2" fill="#3c3c3c"/><circle cx="1425" cy="87.8" r="2.3" fill="#fff" stroke="#e03c3c" stroke-width="1.2"/><circle cx="1436.2" cy="87.8" r="2.3" fill="#fff" stroke="#e03c3c" stroke-width="1.2"/><circle cx="1443.8" cy="111.4" r="2.3" fill="#fff" stroke="#e03c3c" stroke-width="1.2"/><circle cx="1424.4" cy="111.4" r="2.3" fill="#fff" stroke="#e03c3c" stroke-width="1.2"/><line x1="1451.5" y1="82" x2="1451.5" y2="116" stroke="#dcdce6" stroke-width="1.5"/><rect x="1455" y="90" width="1" height="1" fill="#b4b4bd"/><rect x="1458" y="90" width="1" height="1" fill="#b4b4bd"/><rect x="1455" y="93" width="1" height="1" fill="#b4b4bd"/><rect x="1458" y="93" width="1" height="1" fill="#b4b4bd"/><rect x="1455" y="96" width="1" height="1" fill="#b4b4bd"/><rect x="1458" y="96" width="1" height="1" fill="#b4b4bd"/><rect x="1455" y="99" width="1" height="1" fill="#b4b4bd"/><rect x="1458" y="99" width="1" height="1" fill="#b4b4bd"/><rect x="1455" y="102" width="1" height="1" fill="#b4b4bd"/><rect x="1458" y="102" width="1" height="1" fill="#b4b4bd"/><rect x="1455" y="105" width="1" height="1" fill="#b4b4bd"/><rect x="1458" y="105" width="1" height="1" fill="#b4b4bd"/><polygon points="1468.2,96.6 1474.4,90.4 1485,89.6 1490,94.4 1490,102.4 1484.6,108.4 1478,110 1468.6,105.4" fill="#f7b512" stroke="#444" stroke-width="0.9"/><polygon points="1468.2,96.6 1478,100.4 1478,110 1468.6,105.4" fill="#b29870" stroke="#444" stroke-width="0.8"/><polygon points="1474.4,90.4 1479.4,88.4 1485,89.6 1482.4,94.6 1477.4,94" fill="#e8c9a0" stroke="#444" stroke-width="0.7"/><polygon points="1485.4,100.8 1490,95.4 1490,102.4 1485.4,107.8" fill="#b29870" stroke="#444" stroke-width="0.7"/><polyline points="1482.4,94.6 1480.6,100" fill="none" stroke="#444" stroke-width="0.7"/><polygon points="1500.2,96.6 1506.4,90.4 1517,89.6 1522,94.4 1522,102.4 1516.6,108.4 1510,110 1500.6,105.4" fill="#bfcdfb" stroke="#444" stroke-width="0.9"/><polygon points="1500.2,96.6 1510,100.4 1510,110 1500.6,105.4" fill="#b29870" stroke="#444" stroke-width="0.8"/><polygon points="1506.4,90.4 1511.4,88.4 1517,89.6 1514.4,94.6 1509.4,94" fill="#e8c9a0" stroke="#444" stroke-width="0.7"/><polygon points="1517.4,100.8 1522,95.4 1522,102.4 1517.4,107.8" fill="#b29870" stroke="#444" stroke-width="0.7"/><polyline points="1514.4,94.6 1512.6,100" fill="none" stroke="#444" stroke-width="0.7"/><polygon points="1532.2,96.6 1538.4,90.4 1549,89.6 1554,94.4 1554,102.4 1548.6,108.4 1542,110 1532.6,105.4" fill="#bfdba0" stroke="#444" stroke-width="0.9"/><polygon points="1532.2,96.6 1542,100.4 1542,110 1532.6,105.4" fill="#b29870" stroke="#444" stroke-width="0.8"/><polygon points="1538.4,90.4 1543.4,88.4 1549,89.6 1546.4,94.6 1541.4,94" fill="#e8c9a0" stroke="#444" stroke-width="0.7"/><polygon points="1549.4,100.8 1554,95.4 1554,102.4 1549.4,107.8" fill="#b29870" stroke="#444" stroke-width="0.7"/><polyline points="1546.4,94.6 1544.6,100" fill="none" stroke="#444" stroke-width="0.7"/><line x1="1562" y1="82" x2="1562" y2="116" stroke="#dcdce6" stroke-width="1.5"/><rect x="1565" y="90" width="1" height="1" fill="#b4b4bd"/><rect x="1568" y="90" width="1" height="1" fill="#b4b4bd"/><rect x="1565" y="93" width="1" height="1" fill="#b4b4bd"/><rect x="1568" y="93" width="1" height="1" fill="#b4b4bd"/><rect x="1565" y="96" width="1" height="1" fill="#b4b4bd"/><rect x="1568" y="96" width="1" height="1" fill="#b4b4bd"/><rect x="1565" y="99" width="1" height="1" fill="#b4b4bd"/><rect x="1568" y="99" width="1" height="1" fill="#b4b4bd"/><rect x="1565" y="102" width="1" height="1" fill="#b4b4bd"/><rect x="1568" y="102" width="1" height="1" fill="#b4b4bd"/><rect x="1565" y="105" width="1" height="1" fill="#b4b4bd"/><rect x="1568" y="105" width="1" height="1" fill="#b4b4bd"/><polygon points="1577.4,104.6 1585,100 1589.6,102.6 1594.4,99 1600.6,102.6 1598,106.6 1589.4,111.6 1585,108.6" fill="#fff" stroke="#000" stroke-width="1.1" stroke-linejoin="round"/><polyline points="1578.6,106.4 1585,110 1589.4,113 1599,107.4" fill="none" stroke="#8b8468" stroke-width="1.2"/><polygon points="1577.4,100.6 1585,96 1589.6,98.6 1594.4,95 1600.6,98.6 1598,102.6 1589.4,107.6 1585,104.6" fill="#fff" stroke="#000" stroke-width="1.1" stroke-linejoin="round"/><polyline points="1578.6,102.4 1585,106 1589.4,109 1599,103.4" fill="none" stroke="#8b8468" stroke-width="1.2"/><polygon points="1577.4,96.6 1585,92 1589.6,94.6 1594.4,91 1600.6,94.6 1598,98.6 1589.4,103.6 1585,100.6" fill="#fff" stroke="#000" stroke-width="1.1" stroke-linejoin="round"/><polyline points="1578.6,98.4 1585,102 1589.4,105 1599,99.4" fill="none" stroke="#8b8468" stroke-width="1.2"/><polyline points="1579,107.4 1588,112.4 1598,107" fill="none" stroke="#3cc4f0" stroke-width="1.2"/><text x="1584" y="100.6" font-family="Liberation Sans, sans-serif" font-size="9.5" font-weight="bold" fill="#f01414" text-anchor="start" >S</text><polygon points="1609.4,104.6 1617,100 1621.6,102.6 1626.4,99 1632.6,102.6 1630,106.6 1621.4,111.6 1617,108.6" fill="#fff" stroke="#000" stroke-width="1.1" stroke-linejoin="round"/><polyline points="1610.6,106.4 1617,110 1621.4,113 1631,107.4" fill="none" stroke="#8b8468" stroke-width="1.2"/><polygon points="1609.4,100.6 1617,96 1621.6,98.6 1626.4,95 1632.6,98.6 1630,102.6 1621.4,107.6 1617,104.6" fill="#fff" stroke="#000" stroke-width="1.1" stroke-linejoin="round"/><polyline points="1610.6,102.4 1617,106 1621.4,109 1631,103.4" fill="none" stroke="#8b8468" stroke-width="1.2"/><polygon points="1609.4,96.6 1617,92 1621.6,94.6 1626.4,91 1632.6,94.6 1630,98.6 1621.4,103.6 1617,100.6" fill="#fff" stroke="#000" stroke-width="1.1" stroke-linejoin="round"/><polyline points="1610.6,98.4 1617,102 1621.4,105 1631,99.4" fill="none" stroke="#8b8468" stroke-width="1.2"/><polyline points="1611,107.4 1620,112.4 1630,107" fill="none" stroke="#3cc4f0" stroke-width="1.2"/><polyline points="1612,98.6 1615.4,92.6" fill="none" stroke="#1a5fe0" stroke-width="2.2"/><polyline points="1616,98.1 1619.4,92.1" fill="none" stroke="#1a5fe0" stroke-width="2.2"/><polyline points="1620,97.6 1623.4,91.6" fill="none" stroke="#1a5fe0" stroke-width="2.2"/><polyline points="1624,97.1 1627.4,91.1" fill="none" stroke="#1a5fe0" stroke-width="2.2"/><polyline points="1628,96.6 1631.4,90.6" fill="none" stroke="#1a5fe0" stroke-width="2.2"/><polyline points="1610.4,104.4 1617,107.6 1621.4,110.4 1631,104.6" fill="none" stroke="#1a5fe0" stroke-width="1.6"/><polyline points="1610.4,100.4 1617,103.6 1621.4,106.4 1631,100.6" fill="none" stroke="#1a5fe0" stroke-width="1.6"/><polygon points="1641.4,104.6 1649,100 1653.6,102.6 1658.4,99 1664.6,102.6 1662,106.6 1653.4,111.6 1649,108.6" fill="#fff" stroke="#000" stroke-width="1.1" stroke-linejoin="round"/><polyline points="1642.6,106.4 1649,110 1653.4,113 1663,107.4" fill="none" stroke="#8b8468" stroke-width="1.2"/><polygon points="1641.4,100.6 1649,96 1653.6,98.6 1658.4,95 1664.6,98.6 1662,102.6 1653.4,107.6 1649,104.6" fill="#fff" stroke="#000" stroke-width="1.1" stroke-linejoin="round"/><polyline points="1642.6,102.4 1649,106 1653.4,109 1663,103.4" fill="none" stroke="#8b8468" stroke-width="1.2"/><polygon points="1641.4,96.6 1649,92 1653.6,94.6 1658.4,91 1664.6,94.6 1662,98.6 1653.4,103.6 1649,100.6" fill="#fff" stroke="#000" stroke-width="1.1" stroke-linejoin="round"/><polyline points="1642.6,98.4 1649,102 1653.4,105 1663,99.4" fill="none" stroke="#8b8468" stroke-width="1.2"/><polyline points="1643,107.4 1652,112.4 1662,107" fill="none" stroke="#3cc4f0" stroke-width="1.2"/><path d="M1647.6,93.4 C1648,88 1659,86 1661,91 C1662,95 1654.6,97 1654,102 L1654,106" fill="none" stroke="#fa0f0f" stroke-width="3"/><rect x="1652.4" y="108" width="3.2" height="3.2" fill="#fa0f0f"/><polygon points="1673.4,104.6 1681,100 1685.6,102.6 1690.4,99 1696.6,102.6 1694,106.6 1685.4,111.6 1681,108.6" fill="#fff" stroke="#000" stroke-width="1.1" stroke-linejoin="round"/><polyline points="1674.6,106.4 1681,110 1685.4,113 1695,107.4" fill="none" stroke="#8b8468" stroke-width="1.2"/><polygon points="1673.4,100.6 1681,96 1685.6,98.6 1690.4,95 1696.6,98.6 1694,102.6 1685.4,107.6 1681,104.6" fill="#fff" stroke="#000" stroke-width="1.1" stroke-linejoin="round"/><polyline points="1674.6,102.4 1681,106 1685.4,109 1695,103.4" fill="none" stroke="#8b8468" stroke-width="1.2"/><polygon points="1673.4,96.6 1681,92 1685.6,94.6 1690.4,91 1696.6,94.6 1694,98.6 1685.4,103.6 1681,100.6" fill="#fff" stroke="#000" stroke-width="1.1" stroke-linejoin="round"/><polyline points="1674.6,98.4 1681,102 1685.4,105 1695,99.4" fill="none" stroke="#8b8468" stroke-width="1.2"/><polyline points="1675,107.4 1684,112.4 1694,107" fill="none" stroke="#3cc4f0" stroke-width="1.2"/><polygon points="1673.4,94.6 1686.6,94.6 1686.6,87.4 1697.4,98.4 1686.6,109.4 1686.6,102.4 1673.4,102.4" fill="#0a5cf5"/><text x="1679.6" y="100.2" font-family="Liberation Sans, sans-serif" font-size="8.6" font-weight="bold" fill="#f01414" text-anchor="start" >S</text><line x1="1703.5" y1="82" x2="1703.5" y2="116" stroke="#dcdce6" stroke-width="1.5"/><rect x="1707" y="90" width="1" height="1" fill="#b4b4bd"/><rect x="1710" y="90" width="1" height="1" fill="#b4b4bd"/><rect x="1707" y="93" width="1" height="1" fill="#b4b4bd"/><rect x="1710" y="93" width="1" height="1" fill="#b4b4bd"/><rect x="1707" y="96" width="1" height="1" fill="#b4b4bd"/><rect x="1710" y="96" width="1" height="1" fill="#b4b4bd"/><rect x="1707" y="99" width="1" height="1" fill="#b4b4bd"/><rect x="1710" y="99" width="1" height="1" fill="#b4b4bd"/><rect x="1707" y="102" width="1" height="1" fill="#b4b4bd"/><rect x="1710" y="102" width="1" height="1" fill="#b4b4bd"/><rect x="1707" y="105" width="1" height="1" fill="#b4b4bd"/><rect x="1710" y="105" width="1" height="1" fill="#b4b4bd"/><path d="M1715.4,84 C1721,94 1730,103 1741.4,107.6" fill="none" stroke="#000" stroke-width="1.5"/><path d="M1739.6,102.4 C1735.6,106 1737.6,113 1742,113.4 C1745,113.6 1747,111.4 1746.2,108.6" fill="none" stroke="#000" stroke-width="1.3"/><path d="M1736,104 L1746.8,111" fill="none" stroke="#000" stroke-width="2.2"/><line x1="1750.5" y1="82" x2="1750.5" y2="116" stroke="#dcdce6" stroke-width="1.5"/><rect x="1753" y="90" width="1" height="1" fill="#b4b4bd"/><rect x="1756" y="90" width="1" height="1" fill="#b4b4bd"/><rect x="1753" y="93" width="1" height="1" fill="#b4b4bd"/><rect x="1756" y="93" width="1" height="1" fill="#b4b4bd"/><rect x="1753" y="96" width="1" height="1" fill="#b4b4bd"/><rect x="1756" y="96" width="1" height="1" fill="#b4b4bd"/><rect x="1753" y="99" width="1" height="1" fill="#b4b4bd"/><rect x="1756" y="99" width="1" height="1" fill="#b4b4bd"/><rect x="1753" y="102" width="1" height="1" fill="#b4b4bd"/><rect x="1756" y="102" width="1" height="1" fill="#b4b4bd"/><rect x="1753" y="105" width="1" height="1" fill="#b4b4bd"/><rect x="1756" y="105" width="1" height="1" fill="#b4b4bd"/><polygon points="1765.4,108.4 1772.6,90.8 1772.6,108.4" fill="#84b800" stroke="#222" stroke-width="0.9"/><polygon points="1788.6,108.4 1781.4,90.8 1781.4,108.4" fill="#f0920a" stroke="#222" stroke-width="0.9"/><line x1="1777" y1="87" x2="1777" y2="110.4" stroke="#0a14f0" stroke-width="2.2"/><line x1="1796.2" y1="82" x2="1796.2" y2="116" stroke="#dcdce6" stroke-width="1.5"/><rect x="1799" y="90" width="1" height="1" fill="#b4b4bd"/><rect x="1802" y="90" width="1" height="1" fill="#b4b4bd"/><rect x="1799" y="93" width="1" height="1" fill="#b4b4bd"/><rect x="1802" y="93" width="1" height="1" fill="#b4b4bd"/><rect x="1799" y="96" width="1" height="1" fill="#b4b4bd"/><rect x="1802" y="96" width="1" height="1" fill="#b4b4bd"/><rect x="1799" y="99" width="1" height="1" fill="#b4b4bd"/><rect x="1802" y="99" width="1" height="1" fill="#b4b4bd"/><rect x="1799" y="102" width="1" height="1" fill="#b4b4bd"/><rect x="1802" y="102" width="1" height="1" fill="#b4b4bd"/><rect x="1799" y="105" width="1" height="1" fill="#b4b4bd"/><rect x="1802" y="105" width="1" height="1" fill="#b4b4bd"/><polygon points="1809,91 1823,84.4 1823,98" fill="#3c9cf8"/><rect x="1821" y="98" width="2" height="14" fill="#9cc8f4"/></g><g id="lefti"><rect x="27" y="120.4" width="1" height="1" fill="#b4b4bd"/><rect x="27" y="123.4" width="1" height="1" fill="#b4b4bd"/><rect x="30" y="120.4" width="1" height="1" fill="#b4b4bd"/><rect x="30" y="123.4" width="1" height="1" fill="#b4b4bd"/><rect x="33" y="120.4" width="1" height="1" fill="#b4b4bd"/><rect x="33" y="123.4" width="1" height="1" fill="#b4b4bd"/><rect x="36" y="120.4" width="1" height="1" fill="#b4b4bd"/><rect x="36" y="123.4" width="1" height="1" fill="#b4b4bd"/><rect x="39" y="120.4" width="1" height="1" fill="#b4b4bd"/><rect x="39" y="123.4" width="1" height="1" fill="#b4b4bd"/><rect x="42" y="120.4" width="1" height="1" fill="#b4b4bd"/><rect x="42" y="123.4" width="1" height="1" fill="#b4b4bd"/><line x1="8" y1="227.8" x2="60" y2="227.8" stroke="#8a8a8a" stroke-width="1.4"/><line x1="8" y1="393.8" x2="60" y2="393.8" stroke="#8a8a8a" stroke-width="1.4"/><line x1="8" y1="528.2" x2="60" y2="528.2" stroke="#8a8a8a" stroke-width="1.4"/><line x1="8" y1="629.8" x2="60" y2="629.8" stroke="#8a8a8a" stroke-width="1.4"/><line x1="8" y1="731.8" x2="60" y2="731.8" stroke="#8a8a8a" stroke-width="1.4"/><line x1="8" y1="802" x2="60" y2="802" stroke="#8a8a8a" stroke-width="1.4"/><polygon points="13.8,138 13.8,149 16.4,146.6 18.2,150.8 20,150 18.2,146 21.6,145.8" fill="#1d3d63"/><path d="M44.6,141 C40,143 39.6,148 43.4,151.4 C42.6,153 41.6,154 40,154.6 C43,154.6 45,153.6 46.4,152 C52,152.6 57,149 56.6,143.4 C56.4,139.6 53.6,137.2 50.6,136.8" fill="none" stroke="#2a94d6" stroke-width="1.1" stroke-dasharray="2 1.3"/><polygon points="43.8,133 43.8,143 46.2,141 47.8,144.6 49.6,143.8 48,140.2 51,140" fill="#1d3d63"/><polygon points="12.4,172.4 20.4,167 27.4,176 19,184.6 15,183" fill="#dbeaf7" stroke="#1d3d63" stroke-width="1.1" stroke-linejoin="round"/><ellipse cx="20" cy="171.2" rx="5.6" ry="3" fill="none" stroke="#1d3d63" stroke-width="1" transform="rotate(-35 20 171.2)"/><path d="M8.4,181 C7.6,173 10.4,168.4 16.6,167.6 C12.4,171 10.4,176 10.4,181.4 C10,182.6 8.6,182.4 8.4,181 Z" fill="#2a94d6" stroke="#2a94d6" stroke-width="0.8"/><path d="M20,171 L23.4,176.4" fill="none" stroke="#1d3d63" stroke-width="1"/><polygon points="39.6,178.4 51.6,166.6 58.8,173.6 46.6,184.4" fill="#dbeaf7" stroke="#1d3d63" stroke-width="1.1" stroke-linejoin="round"/><polygon points="44,174.2 47.8,170.4 54.8,177 51,180.6" fill="#1f86cf"/><line x1="41" y1="186.2" x2="59.4" y2="186.2" stroke="#6cc0e8" stroke-width="1.4"/><polygon points="14.1,202.4 18,200.2 21.9,202.4 21.9,207 18,209.2 14.1,207" fill="#dbeaf7" stroke="#1d3d63" stroke-width="1" stroke-linejoin="round"/><polyline points="14.1,202.4 18,204.6 21.9,202.4" fill="none" stroke="#1d3d63" stroke-width="0.8"/><line x1="18" y1="204.6" x2="18" y2="209.2" stroke="#1d3d63" stroke-width="0.8"/><polygon points="9.9,209.4 13.8,207.2 17.7,209.4 17.7,214 13.8,216.2 9.9,214" fill="#dbeaf7" stroke="#1d3d63" stroke-width="1" stroke-linejoin="round"/><polyline points="9.9,209.4 13.8,211.6 17.7,209.4" fill="none" stroke="#1d3d63" stroke-width="0.8"/><line x1="13.8" y1="211.6" x2="13.8" y2="216.2" stroke="#1d3d63" stroke-width="0.8"/><polygon points="18.3,209.4 22.2,207.2 26.1,209.4 26.1,214 22.2,216.2 18.3,214" fill="#dbeaf7" stroke="#1d3d63" stroke-width="1" stroke-linejoin="round"/><polyline points="18.3,209.4 22.2,211.6 26.1,209.4" fill="none" stroke="#1d3d63" stroke-width="0.8"/><line x1="22.2" y1="211.6" x2="22.2" y2="216.2" stroke="#1d3d63" stroke-width="0.8"/><polygon points="42.2,210.4 52.6,201.4 59.4,209 49.6,218.4 42.4,218.4" fill="#dbeaf7" stroke="#1d3d63" stroke-width="1.2" stroke-linejoin="round"/><circle cx="46" cy="214.6" r="1.2" fill="none" stroke="#2a94d6" stroke-width="0.9"/><polygon points="12.4,249.4 24,237 27.2,240 15.6,252.4" fill="#fff" stroke="#ff1414" stroke-width="1.2" stroke-linejoin="round"/><polyline points="14,250.8 25.6,238.4" fill="none" stroke="#ff1414" stroke-width="1"/><polygon points="12.4,249.4 15.6,252.4 8.4,256.2" fill="#1d3d63"/><path d="M41.6,254 C45,249 48,252 50.6,255 C53,257.6 57,255 55.6,251 C54,247 44,246 43.6,242.4 C43.4,239.6 47,238.6 50,241.4 C52,243 55,242 56.8,239.4" fill="none" stroke="#2a94d6" stroke-width="1.2"/><circle cx="56.8" cy="239.2" r="2.5" fill="#ff1414"/><circle cx="41.6" cy="254.2" r="1.9" fill="#1d3d63"/><rect x="9.3" y="269.6" width="16" height="18" fill="#dbeaf7" stroke="#2a94d6" stroke-width="1.1"/><line x1="10.4" y1="286" x2="24.6" y2="270.6" stroke="#1d3d63" stroke-width="1"/><circle cx="25" cy="270.4" r="2.6" fill="#ff1414"/><circle cx="10.4" cy="286" r="2" fill="#1d3d63"/><rect x="42.8" y="267.6" width="15.4" height="18.4" fill="#dbeaf7" stroke="#2a94d6" stroke-width="1.1"/><path d="M42.9,274.5 C50,274.4 57,279 57.9,286" fill="none" stroke="#1d3d63" stroke-width="1.1"/><circle cx="42.9" cy="274.5" r="3.1" fill="#ff1414"/><circle cx="42.9" cy="286" r="2" fill="#1d3d63"/><circle cx="57.9" cy="286" r="2" fill="#1d3d63"/><circle cx="18.1" cy="309.8" r="9.8" fill="#dbeaf7" stroke="#2a94d6" stroke-width="1.1"/><line x1="18.1" y1="309.8" x2="25" y2="303.2" stroke="#1d3d63" stroke-width="1"/><circle cx="18.1" cy="309.8" r="2" fill="#1d3d63"/><circle cx="25" cy="303.2" r="2.6" fill="#ff1414"/><polygon points="60.6,309.8 55.2,318.63 44.4,318.63 39,309.8 44.4,300.97 55.2,300.97" fill="#dbeaf7" stroke="#2a94d6" stroke-width="1.1"/><line x1="49.8" y1="309.8" x2="54.4" y2="302.6" stroke="#1d3d63" stroke-width="1"/><circle cx="49.8" cy="309.8" r="2" fill="#1d3d63"/><circle cx="54.4" cy="302.4" r="2.6" fill="#ff1414"/><path d="M10,350.7 V335 M10,350.7 L25.3,335.5" fill="none" stroke="#1d3d63" stroke-width="1"/><path d="M10,350.7 C19,350.4 25,344 25.3,335.5" fill="none" stroke="#2a94d6" stroke-width="1.2"/><circle cx="10" cy="335" r="2" fill="#1d3d63"/><circle cx="10" cy="350.7" r="2" fill="#1d3d63"/><circle cx="25.3" cy="335.5" r="2.6" fill="#ff1414"/><path d="M43.6,350.4 L57.1,336.1 M43.3,335.8 L50.4,343.2" fill="none" stroke="#1d3d63" stroke-width="1"/><path d="M43.6,350.4 C40,345 40,340 43.3,335.8 C47,332.6 53,333 57.1,336.1" fill="none" stroke="#2a94d6" stroke-width="1.2"/><circle cx="57.1" cy="336.1" r="2" fill="#1d3d63"/><circle cx="43.6" cy="350.4" r="2" fill="#1d3d63"/><circle cx="43.3" cy="335.8" r="2.6" fill="#ff1414"/><path d="M16.1,366.1 L25.7,380.5 L10.4,376.8" fill="none" stroke="#1d3d63" stroke-width="1"/><path d="M16.1,366.1 C24,364 30,372 25.7,380.5 C21,385 13,382 10.4,376.8" fill="none" stroke="#2a94d6" stroke-width="1.2"/><circle cx="10.4" cy="376.8" r="2" fill="#1d3d63"/><circle cx="25.7" cy="380.5" r="2" fill="#1d3d63"/><circle cx="16.1" cy="366.1" r="2.6" fill="#ff1414"/><path d="M42.1,366.1 H57.4 C57,374 51,381 42.1,381.7 Z" fill="#dbeaf7" stroke="#2a94d6" stroke-width="1.2"/><path d="M42.1,366.1 V381.7 L57.4,366.7" fill="none" stroke="#1d3d63" stroke-width="1.1"/><circle cx="42.1" cy="366.1" r="2" fill="#1d3d63"/><circle cx="42.1" cy="381.7" r="2" fill="#1d3d63"/><circle cx="57.4" cy="366.7" r="2.6" fill="#ff1414"/><path d="M10,411.8 H26.2 M18.1,403.6 V420" fill="none" stroke="#ff1414" stroke-width="1.6"/><polygon points="28.7,411.8 24.67,414.44 24.67,409.17" fill="#ff1414"/><polygon points="7.5,411.8 11.53,409.17 11.53,414.44" fill="#ff1414"/><polygon points="18.1,422.4 15.47,418.37 20.73,418.37" fill="#ff1414"/><polygon points="18.1,401.2 20.73,405.23 15.47,405.23" fill="#ff1414"/><polygon points="39.6,412.6 50,408 61,412.8 50,419.4" fill="#dbeaf7" stroke="#2a94d6" stroke-width="1.1" stroke-linejoin="round"/><polyline points="39.6,412.6 39.6,415.4 50,422.4 61,415.6 61,412.8" fill="none" stroke="#2a94d6" stroke-width="1.1" stroke-linejoin="round"/><line x1="50" y1="419.4" x2="50" y2="422.4" stroke="#2a94d6" stroke-width="1"/><rect x="48" y="407" width="3.8" height="6.6" fill="#ff1414"/><polygon points="49.9,401.8 45.6,408 54.2,408" fill="#ff1414"/><path d="M11,444 C11,439 15,436.4 19,436.6 M25.2,444.6 C25.2,449.6 21.2,452.2 17.2,452" fill="none" stroke="#ff1414" stroke-width="1.5"/><polygon points="23.4,437.8 18.43,438.38 20.88,433.48" fill="#ff1414"/><polygon points="12.8,450.8 17.77,450.22 15.32,455.12" fill="#ff1414"/><path d="M44,435.6 C39,440 39,448 44.6,453.4 L48.6,450.4 C45.6,447 46,443 49.4,440.4 Z" fill="#dbeaf7" stroke="#2a94d6" stroke-width="1.1" stroke-linejoin="round"/><ellipse cx="46.8" cy="452" rx="2.6" ry="1.3" fill="#dbeaf7" stroke="#2a94d6" stroke-width="1" transform="rotate(-35 46.8 452)"/><path d="M45.4,436.2 C49,433.4 54,434.6 56.4,437.8" fill="none" stroke="#1d3d63" stroke-width="1.1"/><circle cx="57.4" cy="439.1" r="2.6" fill="#ff1414"/><rect x="7.6" y="466.4" width="21" height="19.2" fill="#dbeaf7" stroke="#2a94d6" stroke-width="1.1"/><rect x="7.6" y="474" width="13.4" height="11.6" fill="#dbeaf7" stroke="#1d3d63" stroke-width="1.2"/><line x1="18" y1="476.4" x2="24" y2="470.4" stroke="#ff1414" stroke-width="2.4"/><polygon points="27,467.4 19.4,469 25.4,475" fill="#ff1414"/><path d="M40.8,469.4 C46,465 54,465.4 58.4,470 M60.4,474.6 C61.4,479 60.2,482.6 57.6,485.4" fill="none" stroke="#2a94d6" stroke-width="1.2"/><path d="M41.4,478.6 C43,474.6 47,472.6 50.4,473.4 M54.4,477.6 C55.4,481.4 52.8,485 48.8,486" fill="none" stroke="#1d3d63" stroke-width="1.2"/><line x1="51" y1="476" x2="56" y2="470.6" stroke="#ff1414" stroke-width="2.4"/><polygon points="59.4,466.8 51.6,469 57.4,474.8" fill="#ff1414"/><line x1="16.5" y1="510.6" x2="16.5" y2="501" stroke="#2a94d6" stroke-width="1.2"/><polygon points="16.5,498 18.71,501.38 14.29,501.38" fill="#2a94d6"/><line x1="16.5" y1="510.6" x2="16.5" y2="519.4" stroke="#2a94d6" stroke-width="1" stroke-dasharray="1.4 1.4"/><line x1="16.5" y1="510.6" x2="24" y2="505.6" stroke="#2f9e48" stroke-width="1.2"/><polygon points="27.4,503.4 25.81,507.09 23.38,503.42" fill="#2f9e48"/><line x1="16.5" y1="510.6" x2="9.4" y2="515.4" stroke="#2f9e48" stroke-width="1" stroke-dasharray="1.4 1.4"/><line x1="16.5" y1="510.6" x2="24" y2="515.4" stroke="#ff1414" stroke-width="1.2"/><polygon points="27.6,517.8 23.58,517.78 26.01,514.11" fill="#ff1414"/><line x1="16.5" y1="510.6" x2="9.4" y2="505.6" stroke="#ff1414" stroke-width="1" stroke-dasharray="1.4 1.4"/><circle cx="16.5" cy="510.6" r="2.8" fill="#1d3d63"/><polygon points="39.8,515.6 48.4,500.6 48.4,515.6" fill="#fff" stroke="#1d3d63" stroke-width="1.2" stroke-linejoin="round"/><polygon points="60.8,515.6 52,500.6 52,515.6" fill="#dbeaf7" stroke="#2a94d6" stroke-width="1.2" stroke-linejoin="round"/><line x1="50.2" y1="498" x2="50.2" y2="517" stroke="#f06060" stroke-width="1.6" stroke-dasharray="2 1.2"/><polygon points="10.4,541.6 18.4,536.6 25.6,543.6 21,551 12,552" fill="#dbeaf7" stroke="#1d3d63" stroke-width="1.2" stroke-linejoin="round"/><circle cx="17.6" cy="544.1" r="3" fill="#ff1414"/><path d="M12,552 L9.4,555.8 M9.6,554 L15.6,550.6" fill="none" stroke="#1d3d63" stroke-width="1.1"/><path d="M40.6,543.6 L52.6,536.4 M44.6,549.4 L41.4,543 M51.6,541.6 L48.6,536.4 M44.6,549.4 L41,546 M51.6,541.6 L55,544" fill="none" stroke="#1d3d63" stroke-width="1.2"/><text x="44.8" y="542" font-family="Liberation Sans, sans-serif" font-size="6" font-weight="normal" fill="#1d3d63" text-anchor="start" transform="rotate(-32 46 541)">5</text><circle cx="56.7" cy="545.3" r="2.7" fill="#ff1414"/><circle cx="49.3" cy="553" r="2.7" fill="#ff1414"/><path d="M12.4,587.4 C7.4,578 14,569.6 27.6,570.4 Z" fill="#dbeaf7" stroke="#1d3d63" stroke-width="1.7" stroke-linejoin="round"/><path d="M15.4,583 C13,577.6 17,573.6 23.4,573.4" fill="none" stroke="#1d3d63" stroke-width="1.6" stroke-dasharray="1.2 1"/><path d="M14.6,585.6 L25.4,573" fill="none" stroke="#1d3d63" stroke-width="0.9"/><rect x="44.6" y="567.8" width="16" height="14" fill="#dbeaf7" stroke="#1d3d63" stroke-width="1.2" rx="1"/><text x="46.6" y="578.4" font-family="Liberation Sans, sans-serif" font-size="8.4" font-weight="bold" fill="#1d3d63" text-anchor="start" font-family="Liberation Serif, serif">A1</text><path d="M44.6,574.4 H41.2 V585" fill="none" stroke="#1d3d63" stroke-width="1.1"/><polygon points="41.2,589 38.99,585.62 43.41,585.62" fill="#1d3d63"/><circle cx="18" cy="609.6" r="8.4" fill="#dbeaf7" stroke="#1d3d63" stroke-width="1.1"/><line x1="7.4" y1="609.6" x2="25" y2="609.6" stroke="#1d3d63" stroke-width="1.2"/><path d="M19,600.4 L28,609.6 L19,619" fill="none" stroke="#1d3d63" stroke-width="1.2"/><text x="18" y="607.6" font-family="Liberation Sans, sans-serif" font-size="4.6" font-weight="normal" fill="#1d3d63" text-anchor="middle" >C</text><text x="18" y="615.4" font-family="Liberation Sans, sans-serif" font-size="4.2" font-weight="normal" fill="#1d3d63" text-anchor="middle" >A-B</text><polygon points="42.4,617 47.4,600.4 51.4,600.4 56.4,619.6 53,619.6 52,614.6 46.6,613.6 45.4,617.6" fill="#2a94d6"/><polygon points="47.4,600.4 49,600.4 46,613.6 44.4,617.2 42.4,617" fill="#9fd3f0"/><polygon points="48.6,605 50.6,611.4 47,611" fill="#f0f0f5"/><path d="M12.6,643.4 C7,645.6 7,650.6 13.4,652 M22.6,652.4 C29,650.6 29,645.4 22.6,643.6" fill="none" stroke="#ff1414" stroke-width="2.2"/><path d="M13.6,643 C16,642.4 19.6,642.4 22,643" fill="none" stroke="#ff1414" stroke-width="1.4"/><polygon points="17,652.6 12.57,654.9 13.11,649.46" fill="#ff1414"/><polygon points="19,642.8 22.05,641.22 21.67,644.96" fill="#ff1414"/><line x1="17.6" y1="637.6" x2="17.6" y2="657" stroke="#1d3d63" stroke-width="1.1"/><path d="M44,642.6 H55" fill="none" stroke="#ff1414" stroke-width="1.5"/><polygon points="41,642.6 44.64,640.22 44.64,644.98" fill="#ff1414"/><polygon points="57.6,642.6 53.96,644.98 53.96,640.22" fill="#ff1414"/><path d="M48.4,652 V643.4 C48.4,641.6 50.8,641.6 50.8,643.4 V648 C51,646.4 53,646.6 53.2,648 C53.6,647 55.4,647.2 55.6,648.6 C56.2,647.8 57.8,648.2 57.8,649.8 V654 C57.8,657 55.8,658.4 53.4,658.4 C50,658.4 48.4,657 46.4,653.6 L44.6,650.4 C45.4,649.4 47,650 48.4,652 Z" fill="#dbeaf7" stroke="#3b76a8" stroke-width="1"/><circle cx="21.4" cy="676.4" r="6.3" fill="none" stroke="#1d3d63" stroke-width="1.3"/><line x1="16.8" y1="681.2" x2="9.4" y2="689" stroke="#1d3d63" stroke-width="2" stroke-linecap="round"/><rect x="39.8" y="669.4" width="21" height="21" fill="none" stroke="#2a94d6" stroke-width="1.6" stroke-dasharray="1.1 1.1"/><circle cx="52.4" cy="676.6" r="5.4" fill="none" stroke="#1d3d63" stroke-width="1.3"/><line x1="48.4" y1="680.6" x2="42" y2="687.4" stroke="#1d3d63" stroke-width="1.9" stroke-linecap="round"/><circle cx="17.3" cy="712.5" r="5.2" fill="none" stroke="#1d3d63" stroke-width="1.3"/><line x1="13.6" y1="716.4" x2="8.6" y2="721.6" stroke="#1d3d63" stroke-width="1.9" stroke-linecap="round"/><line x1="12.2" y1="706.8" x2="9.4" y2="704" stroke="#ff1414" stroke-width="1.5"/><polygon points="8,702.6 12.21,703.48 8.88,706.81" fill="#ff1414"/><line x1="22.8" y1="706.8" x2="25.6" y2="704" stroke="#ff1414" stroke-width="1.5"/><polygon points="27,702.6 26.12,706.81 22.79,703.48" fill="#ff1414"/><line x1="23.2" y1="717.2" x2="26" y2="720" stroke="#ff1414" stroke-width="1.5"/><polygon points="27.4,721.4 23.19,720.52 26.52,717.19" fill="#ff1414"/><path d="M53,704.4 H55.4 V715.6 H40.6 V706.4 H43 L44,704.4 H48.6 L49.6,706.4 H51" fill="none" stroke="#1d3d63" stroke-width="1.2"/><path d="M50,710.4 H55.6 C60.6,710.4 60.6,719.4 55.6,719.4 H51" fill="none" stroke="#f02020" stroke-width="1.2"/><polygon points="48,710.4 51.38,708.19 51.38,712.61" fill="#ff1414"/><rect x="11.6" y="743" width="12.8" height="8.4" fill="#dbeaf7" stroke="#3b76a8" stroke-width="1.1" rx="1"/><rect x="14.6" y="741.4" width="6.6" height="2" fill="#dbeaf7" stroke="#3b76a8" stroke-width="0.9"/><circle cx="18" cy="746.8" r="2.5" fill="#ff1414"/><path d="M14.6,751.6 L12,759.4 M21.4,751.6 L24,759.4 M18,751.6 V757.4" fill="none" stroke="#1d3d63" stroke-width="1"/><line x1="12.6" y1="760.6" x2="23.6" y2="760.6" stroke="#bbb" stroke-width="1"/><circle cx="49.4" cy="741.2" r="1.9" fill="#1d3d63"/><path d="M49,743.6 L47.6,751.6 L44.6,760 M48,751 L52,755 L53,760 M48.6,745.6 L52.6,749.4 L54.6,749.8" fill="none" stroke="#1d3d63" stroke-width="1.9" stroke-linejoin="round" stroke-linecap="round"/><rect x="44.4" y="744.4" width="2.6" height="5.6" fill="#f03030" rx="1"/><line x1="55.6" y1="745" x2="55.6" y2="760.6" stroke="#2a94d6" stroke-width="0.9"/><line x1="43" y1="760.8" x2="58" y2="760.8" stroke="#1d3d63" stroke-width="1"/><ellipse cx="18.4" cy="783.6" rx="9.4" ry="7" fill="#fff" stroke="#1d3d63" stroke-width="1.2"/><path d="M9,780.6 C12,774.6 24,774.4 27.8,781 C24,778.6 13,778.4 9,780.6 Z" fill="#1d3d63" stroke="#1d3d63" stroke-width="1"/><path d="M8.2,776.4 L12,779 M8,779.4 L11,780.6 M9.6,774.4 L13,778" fill="none" stroke="#1d3d63" stroke-width="1"/><circle cx="19.6" cy="784" r="4.4" fill="#2a94d6" stroke="#1d3d63" stroke-width="1"/><circle cx="19.6" cy="784" r="1.8" fill="#fff"/><polygon points="38,782.2 54.4,773.4 54.4,791" fill="none" stroke="#1d3d63" stroke-width="1.1" stroke-linejoin="round"/><path d="M54.4,773.4 L57.6,771.4 M54.4,791 L57.6,793" fill="none" stroke="#1d3d63" stroke-width="1" stroke-dasharray="1.6 1.2"/><path d="M50.4,776 C53,780 53,784.4 50.4,788.4" fill="none" stroke="#2a94d6" stroke-width="1.1"/><path d="M56.8,774.6 C59,779.6 59,784.6 56.8,789.6" fill="none" stroke="#2a94d6" stroke-width="1.2"/><polygon points="56.4,773.6 58.63,775.48 55.57,776.4" fill="#2a94d6"/><polygon points="56.4,790.6 55.57,787.8 58.63,788.72" fill="#2a94d6"/><polygon points="7.6,814 17.6,808.4 27.6,814 27.6,821 20.4,829.6 16.6,829.6 7.6,824.6" fill="none" stroke="#1868b4" stroke-width="1.6" stroke-linejoin="round"/><polygon points="11,815.6 17.6,811.8 24.2,815.6 24.2,822 17.6,826 11,822" fill="none" stroke="#1868b4" stroke-width="1.5" stroke-linejoin="round"/><path d="M14.4,817.6 L17.6,819.4 L20.8,817.6 M17.6,819.4 V823" fill="none" stroke="#1868b4" stroke-width="1.3"/><polygon points="23.4,820.6 28.2,820.6 28.2,826.6 31.8,826.6 25.8,833 19.8,826.6 23.4,826.6" fill="#fff" stroke="#1868b4" stroke-width="1.2" stroke-linejoin="round"/><path d="M39.6,813.6 C45,818.6 50,817.6 59,812.2" fill="none" stroke="#1868b4" stroke-width="2.2"/><path d="M39.6,818 C45,823 50,822 59,816.6" fill="none" stroke="#1868b4" stroke-width="2.2"/><path d="M39.6,822.4 C45,827.4 50,826.4 59,821" fill="none" stroke="#1868b4" stroke-width="2.2"/><path d="M39.6,826.6 C45,821.6 51,819.6 59.6,813.6" fill="none" stroke="#1868b4" stroke-width="2.4"/><path d="M40,811.6 C46,815.6 50,819.6 58,823.6" fill="none" stroke="#1868b4" stroke-width="2.4"/><circle cx="56.4" cy="826.6" r="5.6" fill="#fff" stroke="#1868b4" stroke-width="1.2"/><path d="M53.6,825.6 C54.4,823.4 57.6,823 59,825 M59.2,827.6 C58.4,829.8 55.2,830.2 53.8,828.2" fill="none" stroke="#1868b4" stroke-width="1.2"/><polygon points="9,846.6 18.4,841.4 27.6,846.6 18.4,852" fill="none" stroke="#1868b4" stroke-width="1.8" stroke-linejoin="round"/><polygon points="14.4,846.6 18.4,844.4 22.4,846.6 18.4,849" fill="none" stroke="#1868b4" stroke-width="1.2" stroke-linejoin="round"/><path d="M9,851 L18.4,856.4 L22,854.4 M9,855.4 L18.4,860.8 L22,858.8 M9,859.6 L18.4,864.8 L22,862.8" fill="none" stroke="#1868b4" stroke-width="1.8"/><polygon points="21.6,855 27.6,855 27.6,851.6 33.8,857.6 27.6,863.6 27.6,860.2 21.6,860.2" fill="#fff" stroke="#1868b4" stroke-width="1.2" stroke-linejoin="round"/><path d="M39.6,845.6 C45,850.6 50,849.6 59,844.2" fill="none" stroke="#1868b4" stroke-width="2.2"/><path d="M39.6,850 C45,855 50,854 59,848.6" fill="none" stroke="#1868b4" stroke-width="2.2"/><path d="M39.6,854.4 C45,859.4 50,858.4 59,853" fill="none" stroke="#1868b4" stroke-width="2.2"/><path d="M39.6,858.6 C45,853.6 51,851.6 59.6,845.6" fill="none" stroke="#1868b4" stroke-width="2.4"/><path d="M40,843.6 C46,847.6 50,851.6 58,855.6" fill="none" stroke="#1868b4" stroke-width="2.4"/><circle cx="56.6" cy="858.6" r="6.4" fill="#f0f0f5"/><path d="M61.07,857.51 L62.71,857.53 L62.71,859.67 L61.07,859.69 L60.53,860.99 L61.67,862.16 L60.16,863.67 L58.99,862.53 L57.69,863.07 L57.67,864.71 L55.53,864.71 L55.51,863.07 L54.21,862.53 L53.04,863.67 L51.53,862.16 L52.67,860.99 L52.13,859.69 L50.49,859.67 L50.49,857.53 L52.13,857.51 L52.67,856.21 L51.53,855.04 L53.04,853.53 L54.21,854.67 L55.51,854.13 L55.53,852.49 L57.67,852.49 L57.69,854.13 L58.99,854.67 L60.16,853.53 L61.67,855.04 L60.53,856.21 Z M54.4,858.6 a2.2,2.2 0 1 0 4.4,0 a2.2,2.2 0 1 0 -4.4,0 Z" fill="#1868b4" fill-rule="evenodd"/><circle cx="56.6" cy="858.6" r="3.4" fill="#fff"/><circle cx="56.6" cy="858.6" r="1.9" fill="none" stroke="#1868b4" stroke-width="1"/></g><g id="misci"><path d="M3.2,7.6 L9.8,3.6 L16.6,7.4 L16.6,13.6 L10.4,17.8" fill="none" stroke="#1470b0" stroke-width="1.5" stroke-linejoin="round"/><path d="M5.6,8.6 L9.8,6.2 L14.2,8.6 L14.2,12.6 L10.4,15" fill="none" stroke="#1470b0" stroke-width="1.4" stroke-linejoin="round"/><path d="M8.2,9.4 L9.8,8.6 L11.8,9.8 L11.8,12 L10.4,12.8" fill="none" stroke="#1470b0" stroke-width="1.3" stroke-linejoin="round"/><path d="M3.4,8.4 L8.2,11.2 M3.4,11 L8.2,13.8 M3.4,13.6 L8.2,16.4" fill="none" stroke="#1470b0" stroke-width="1.6"/><path d="M9.2,10.4 V18.2" fill="none" stroke="#1470b0" stroke-width="1.6"/><line x1="1800" y1="10.5" x2="1809.4" y2="10.5" stroke="#111" stroke-width="1"/><path d="M1259.24,177.56 L1261.09,177.58 L1261.09,180.02 L1259.24,180.04 L1258.7,181.35 L1259.99,182.67 L1258.27,184.39 L1256.95,183.1 L1255.64,183.64 L1255.62,185.49 L1253.18,185.49 L1253.16,183.64 L1251.85,183.1 L1250.53,184.39 L1248.81,182.67 L1250.1,181.35 L1249.56,180.04 L1247.71,180.02 L1247.71,177.58 L1249.56,177.56 L1250.1,176.25 L1248.81,174.93 L1250.53,173.21 L1251.85,174.5 L1253.16,173.96 L1253.18,172.11 L1255.62,172.11 L1255.64,173.96 L1256.95,174.5 L1258.27,173.21 L1259.99,174.93 L1258.7,176.25 Z M1251.8,178.8 a2.6,2.6 0 1 0 5.2,0 a2.6,2.6 0 1 0 -5.2,0 Z" fill="#111" fill-rule="evenodd"/><defs><linearGradient id="gpl" x1="0" y1="0" x2="1" y2="1"><stop offset="0" stop-color="#2457d6"/><stop offset="1" stop-color="#5a9bf5"/></linearGradient><linearGradient id="gfm" x1="0" y1="0" x2="1" y2="0"><stop offset="0" stop-color="#0a3d8a"/><stop offset="0.5" stop-color="#3aa0f0"/><stop offset="1" stop-color="#0a3d8a"/></linearGradient><radialGradient id="ggr" cx="0.5" cy="0.35" r="0.7"><stop offset="0" stop-color="#b5b5b5"/><stop offset="1" stop-color="#6e6e6e"/></radialGradient><radialGradient id="ghp" cx="0.5" cy="0.3" r="0.8"><stop offset="0" stop-color="#4aa0f5"/><stop offset="1" stop-color="#0e4fb0"/></radialGradient></defs><polygon points="1283.8,259.2 1304.2,270.8 1283.8,282.8" fill="url(#gpl)" stroke="#2a55c8" stroke-width="0.8" stroke-linejoin="round"/><circle cx="1325.8" cy="270.8" r="11" fill="#fff" stroke="#3a3a3a" stroke-width="2.2"/><circle cx="1325.8" cy="270.8" r="9.4" fill="none" stroke="#cfcfcf" stroke-width="1.2"/><circle cx="1325.8" cy="270.8" r="4.4" fill="#e8141c"/><rect x="1347.8" y="260.6" width="20.6" height="20.6" fill="none" stroke="#3f48cc" stroke-width="1.6" stroke-dasharray="4 3.4"/><rect x="1346.6" y="259.4" width="3.8" height="3.8" fill="#3f48cc"/><rect x="1365.8" y="259.4" width="3.8" height="3.8" fill="#3f48cc"/><rect x="1346.6" y="278.6" width="3.8" height="3.8" fill="#3f48cc"/><rect x="1365.8" y="278.6" width="3.8" height="3.8" fill="#3f48cc"/><circle cx="1390.2" cy="270.8" r="10.8" fill="url(#ggr)" stroke="#9a9a9a" stroke-width="1"/><path d="M1385.6,266.2 L1394.8,275.4 M1394.8,266.2 L1385.6,275.4" fill="none" stroke="#fff" stroke-width="2.8" stroke-linecap="round"/><circle cx="1421.8" cy="272.6" r="8.6" fill="none" stroke="#3f48cc" stroke-width="2.8"/><path d="M1421.8,272.6 L1425.6,267.6" fill="none" stroke="#3f48cc" stroke-width="2.2"/><rect x="1418.6" y="259.4" width="6.6" height="2.8" fill="#3f48cc" rx="1"/><line x1="1421.8" y1="261" x2="1421.8" y2="264.6" stroke="#3f48cc" stroke-width="2.4"/><line x1="1429.2" y1="263.6" x2="1431.6" y2="265.8" stroke="#3f48cc" stroke-width="2.4"/><polygon points="1442.2,259.6 1465.8,261.6 1465.8,282.6 1442.2,279.4" fill="#111"/><polygon points="1442.2,262.6 1465.8,264.6 1465.8,279.4 1442.2,276.6" fill="url(#gfm)"/><path d="M1450,263.4 V277.6 M1458,264 V278.6" fill="none" stroke="#0a2a5a" stroke-width="1"/><rect x="1443.4" y="260.3" width="1.5" height="1.3" fill="#ddd"/><rect x="1443.4" y="277.8" width="1.5" height="1.3" fill="#ddd"/><rect x="1446.3" y="260.55" width="1.5" height="1.3" fill="#ddd"/><rect x="1446.3" y="278.2" width="1.5" height="1.3" fill="#ddd"/><rect x="1449.2" y="260.8" width="1.5" height="1.3" fill="#ddd"/><rect x="1449.2" y="278.6" width="1.5" height="1.3" fill="#ddd"/><rect x="1452.1" y="261.05" width="1.5" height="1.3" fill="#ddd"/><rect x="1452.1" y="279" width="1.5" height="1.3" fill="#ddd"/><rect x="1455" y="261.3" width="1.5" height="1.3" fill="#ddd"/><rect x="1455" y="279.4" width="1.5" height="1.3" fill="#ddd"/><rect x="1457.9" y="261.55" width="1.5" height="1.3" fill="#ddd"/><rect x="1457.9" y="279.8" width="1.5" height="1.3" fill="#ddd"/><rect x="1460.8" y="261.8" width="1.5" height="1.3" fill="#ddd"/><rect x="1460.8" y="280.2" width="1.5" height="1.3" fill="#ddd"/><rect x="1463.7" y="262.05" width="1.5" height="1.3" fill="#ddd"/><rect x="1463.7" y="280.6" width="1.5" height="1.3" fill="#ddd"/><circle cx="1486.4" cy="270.8" r="11" fill="#fff" stroke="#c9c9c9" stroke-width="1"/><circle cx="1486.4" cy="270.8" r="8.6" fill="url(#ghp)"/><text x="1486.4" y="275.6" font-family="Liberation Sans, sans-serif" font-size="13.5" font-weight="bold" fill="#fff" text-anchor="middle" >?</text><path d="M1490.5,239.1 L1496.1,244.7 M1496.1,239.1 L1490.5,244.7" fill="none" stroke="#333" stroke-width="1"/><path d="M1617.8,262.4 L1623.4,268 M1623.4,262.4 L1617.8,268" fill="none" stroke="#333" stroke-width="1"/><path d="M1570.4,918.4 L1576,924 M1576,918.4 L1570.4,924" fill="none" stroke="#333" stroke-width="1"/><circle cx="1611.6" cy="293.6" r="8" fill="none" stroke="#1d3d63" stroke-width="1.7"/><polygon points="1603.2,281.6 1607.8,284.4 1603.8,286" fill="#1d3d63"/><polygon points="1620.4,291.4 1624.8,293.6 1620.4,295.8" fill="#1d3d63"/><polygon points="1603.2,305.8 1607.8,303 1603.8,301.4" fill="#1d3d63"/><rect x="1555.6" y="939.4" width="9.6" height="12.6" fill="#fff" stroke="#e8282c" stroke-width="1.1"/><polygon points="1558.6,944.6 1566.4,942.6 1572.4,947 1572.4,956 1566,959.4 1559.6,953.4" fill="#c9a36a" stroke="#222" stroke-width="0.9"/><polygon points="1558.6,944.6 1565.4,949.4 1566,959.4 1559.6,953.4" fill="#e8c88e" stroke="#222" stroke-width="0.8"/><polygon points="1566,959.6 1573.6,955.6 1574.8,958.4 1569.4,961.6" fill="#555"/><circle cx="1558.8" cy="944.4" r="1.7" fill="#e8141c"/><rect x="3" y="989" width="1" height="1" fill="#b4b4bd"/><rect x="6" y="989" width="1" height="1" fill="#b4b4bd"/><rect x="3" y="992" width="1" height="1" fill="#b4b4bd"/><rect x="6" y="992" width="1" height="1" fill="#b4b4bd"/><rect x="136" y="988.6" width="159.4" height="6" fill="#fff" stroke="#8a8a8a" stroke-width="1" rx="2"/><line x1="300.5" y1="983" x2="300.5" y2="993" stroke="#dcdce6" stroke-width="1.5"/><rect x="304" y="989" width="1" height="1" fill="#b4b4bd"/><rect x="307" y="989" width="1" height="1" fill="#b4b4bd"/><rect x="304" y="992" width="1" height="1" fill="#b4b4bd"/><rect x="307" y="992" width="1" height="1" fill="#b4b4bd"/><circle cx="325.6" cy="1001" r="14.6" fill="#fff" stroke="#f0a080" stroke-width="0.9"/><polygon points="319.6,993 322.2,987.4 329,987.4 331.6,993" fill="none" stroke="#e8501c" stroke-width="1.6"/><line x1="346" y1="989.6" x2="346" y2="993" stroke="#555" stroke-width="1.2"/><polygon points="357,993 368,984.6 368,993" fill="#333"/><line x1="381.5" y1="983" x2="381.5" y2="993" stroke="#dcdce6" stroke-width="1.5"/><rect x="385" y="989" width="1" height="1" fill="#b4b4bd"/><rect x="388" y="989" width="1" height="1" fill="#b4b4bd"/><rect x="385" y="992" width="1" height="1" fill="#b4b4bd"/><rect x="388" y="992" width="1" height="1" fill="#b4b4bd"/><polygon points="398.4,989.4 416.4,988 416.4,993 398.4,993" fill="#a8f09a" stroke="#e8501c" stroke-width="0.8"/><rect x="398.4" y="989.4" width="3.4" height="3.6" fill="#e8141c"/><line x1="429.4" y1="989.6" x2="429.4" y2="993" stroke="#555" stroke-width="1.2"/><polygon points="437.4,989.4 457,988.4 457,993 437.4,993" fill="#a8f09a"/><rect x="449.4" y="988" width="7.8" height="5" fill="#0a14f0"/><rect x="437" y="989" width="3" height="2.4" fill="#e8501c"/><line x1="467.4" y1="989.6" x2="467.4" y2="993" stroke="#555" stroke-width="1.2"/><polygon points="473.4,993 478.6,988.4 483.6,993" fill="#8ee08a" stroke="#3a9a3a" stroke-width="0.7"/><rect x="487" y="991.6" width="5.4" height="1.4" fill="#0a14f0"/><polygon points="518,993 523.6,988.4 529.4,993" fill="#f0a0a8" stroke="#c06070" stroke-width="0.7"/><line x1="537.6" y1="989.6" x2="537.6" y2="993" stroke="#555" stroke-width="1.2"/><polygon points="543.6,988.6 548.6,988.6 549.4,991.4 553.4,991.6 553.4,993 543.6,993" fill="#8ee08a" stroke="#3a9a3a" stroke-width="0.7"/><line x1="575.4" y1="989.6" x2="575.4" y2="993" stroke="#555" stroke-width="1.2"/><polygon points="581.4,990.4 602,988.4 600.4,993 583,993" fill="#5ad07a" stroke="#0a14f0" stroke-width="0.9"/><line x1="613" y1="989.6" x2="613" y2="993" stroke="#555" stroke-width="1.2"/><polygon points="620,990.4 631,988.6 642,991 642,993 622,993" fill="#9ee09a" stroke="#3a7a3a" stroke-width="0.7"/><rect x="634" y="991" width="7" height="2" fill="#0a14f0"/><polygon points="652,991 664,988.6 676,991.4 672,993 655,993" fill="#f0a0a8" stroke="#a05060" stroke-width="0.7"/><rect x="664" y="991" width="8" height="2" fill="#b01c2c"/><polygon points="689.6,989 700,989 700,993 689.6,993" fill="#b01c2c"/><polygon points="700,993 706,988.6 712,993" fill="#f0a0a8" stroke="#a05060" stroke-width="0.6"/><line x1="721.6" y1="989.6" x2="721.6" y2="993" stroke="#555" stroke-width="1.2"/><line x1="727" y1="983" x2="727" y2="993" stroke="#dcdce6" stroke-width="1.5"/><rect x="730.5" y="989" width="1" height="1" fill="#b4b4bd"/><rect x="733.5" y="989" width="1" height="1" fill="#b4b4bd"/><rect x="730.5" y="992" width="1" height="1" fill="#b4b4bd"/><rect x="733.5" y="992" width="1" height="1" fill="#b4b4bd"/><rect x="743.4" y="988.6" width="15" height="8" fill="#eef6fc" stroke="#3cb4e8" stroke-width="1.8"/><rect x="781.4" y="989.8" width="15" height="8" fill="#eef6fc" stroke="#3c5a7a" stroke-width="1.0"/><rect x="813.4" y="988.6" width="14" height="8" fill="#eef6fc" stroke="#5cc0f0" stroke-width="1.6"/><rect x="845.4" y="989.8" width="13" height="8" fill="#eef6fc" stroke="#3c5a7a" stroke-width="1.0"/><rect x="877.4" y="988.6" width="13.6" height="8" fill="#eef6fc" stroke="#1c9ce0" stroke-width="1.8"/><rect x="909.4" y="988.6" width="13.6" height="8" fill="#eef6fc" stroke="#5cc0f0" stroke-width="1.8"/><line x1="773.6" y1="989.6" x2="773.6" y2="993" stroke="#333" stroke-width="1.2"/><line x1="938.6" y1="983" x2="938.6" y2="993" stroke="#dcdce6" stroke-width="1.5"/><rect x="942" y="989" width="1" height="1" fill="#b4b4bd"/><rect x="945" y="989" width="1" height="1" fill="#b4b4bd"/><rect x="942" y="992" width="1" height="1" fill="#b4b4bd"/><rect x="945" y="992" width="1" height="1" fill="#b4b4bd"/><polygon points="956,992 973.6,989.4 973.6,993 956,993" fill="#fff" stroke="#000" stroke-width="1.2"/><polygon points="988,992 1005.6,989.4 1005.6,993 988,993" fill="#5a7af0" stroke="#0a14c0" stroke-width="1.2"/><rect x="1020" y="989.6" width="19.6" height="6" fill="#e4e4e4" stroke="#555" stroke-width="1" rx="2"/><path d="M1024,990.6 v3 M1028,990.6 v3 M1032,990.6 v3 M1036,990.6 v3" fill="none" stroke="#888" stroke-width="0.9"/><rect x="1051.6" y="989.6" width="19.6" height="6" fill="#e4e4e4" stroke="#555" stroke-width="1" rx="2"/><path d="M1055.6,990.6 v3 M1059.6,990.6 v3 M1063.6,990.6 v3 M1067.6,990.6 v3" fill="none" stroke="#888" stroke-width="0.9"/><rect x="1083.6" y="989.6" width="19.6" height="6" fill="#e4e4e4" stroke="#555" stroke-width="1" rx="2"/><path d="M1087.6,990.6 v3 M1091.6,990.6 v3 M1095.6,990.6 v3 M1099.6,990.6 v3" fill="none" stroke="#888" stroke-width="0.9"/><rect x="1116" y="989.6" width="19.6" height="6" fill="#e4e4e4" stroke="#555" stroke-width="1" rx="2"/><path d="M1120,990.6 v3 M1124,990.6 v3 M1128,990.6 v3 M1132,990.6 v3" fill="none" stroke="#888" stroke-width="0.9"/><polygon points="1122,993 1125.8,989 1129.6,993" fill="#e8141c"/><line x1="1141.6" y1="983" x2="1141.6" y2="993" stroke="#dcdce6" stroke-width="1.5"/><rect x="1145" y="989" width="1" height="1" fill="#b4b4bd"/><rect x="1148" y="989" width="1" height="1" fill="#b4b4bd"/><rect x="1145" y="992" width="1" height="1" fill="#b4b4bd"/><rect x="1148" y="992" width="1" height="1" fill="#b4b4bd"/><polygon points="1156,993 1162,989.6 1162,993" fill="#e8a020" stroke="#000" stroke-width="0.8"/><polygon points="1183.6,993 1177.6,989.6 1177.6,993" fill="#e8a020" stroke="#000" stroke-width="0.8"/><line x1="1162" y1="992.4" x2="1177.6" y2="992.4" stroke="#000" stroke-width="1.2"/><line x1="1190.4" y1="983" x2="1190.4" y2="993" stroke="#dcdce6" stroke-width="1.5"/><rect x="1194" y="989" width="1" height="1" fill="#b4b4bd"/><rect x="1197" y="989" width="1" height="1" fill="#b4b4bd"/><rect x="1194" y="992" width="1" height="1" fill="#b4b4bd"/><rect x="1197" y="992" width="1" height="1" fill="#b4b4bd"/><circle cx="1217.4" cy="1001.4" r="14.6" fill="#fff" stroke="#f0a080" stroke-width="0.9"/><polygon points="1211.4,993 1214,987.6 1220.8,987.6 1223.4,993" fill="none" stroke="#e8501c" stroke-width="1.6"/><line x1="1238" y1="989.6" x2="1238" y2="993" stroke="#555" stroke-width="1.2"/><path d="M1243,988.6 C1247,986.6 1253,987 1257,990 M1246,990 L1249,993 M1250,988.6 L1254,993" fill="none" stroke="#e8901c" stroke-width="1.4"/><path d="M1243,988.4 C1247,986.2 1253,986.6 1257.6,989.6" fill="none" stroke="#333" stroke-width="0.8"/><rect x="1274.4" y="988" width="26.4" height="6" fill="#f09020" stroke="#a05010" stroke-width="0.8"/><circle cx="1313" cy="991.4" r="2.6" fill="#222"/><circle cx="1320" cy="989.4" r="3" fill="#222"/><circle cx="1326.6" cy="991.6" r="2.4" fill="#222"/><line x1="1339.6" y1="989.6" x2="1339.6" y2="993" stroke="#555" stroke-width="1.2"/><rect x="1342.4" y="985.4" width="31" height="10" fill="#dbeaf8" stroke="#5aa2dc" stroke-width="1" rx="3"/><rect x="1349.6" y="987.6" width="17" height="7" fill="#fff" stroke="#334" stroke-width="1.1"/><line x1="1351.6" y1="990.6" x2="1364.6" y2="990.6" stroke="#334" stroke-width="1"/><path d="M1377,990.4 L1383,987.4 L1389.4,990.4 L1395.4,987.4 L1402,990.4 M1377,990.4 V993 M1389.4,990.4 V993 M1402,990.4 V993" fill="none" stroke="#333" stroke-width="0.9"/><polygon points="1414,993 1426,987.6 1428.4,989.4 1420,993" fill="#666"/><rect x="1441.4" y="988" width="25" height="6" fill="#fff" stroke="#333" stroke-width="1.1"/><rect x="1470.6" y="985.4" width="31" height="10" fill="#dbeaf8" stroke="#5aa2dc" stroke-width="1" rx="3"/><rect x="1477.6" y="988.4" width="17" height="6" fill="#aab4c4" rx="2.6"/><rect x="1485" y="988" width="7.6" height="5" fill="#f0a030" rx="2"/><line x1="1505.4" y1="989.6" x2="1505.4" y2="993" stroke="#555" stroke-width="1.2"/><path d="M1515,993 C1516,989 1524,987.6 1531,990" fill="none" stroke="#e8901c" stroke-width="1.3"/><path d="M1559,990.4 L1563.4,986.6 L1566,988.6 L1561.6,992.6" fill="#fff" stroke="#333" stroke-width="0.8"/><path d="M1580,993 C1584,988 1596,986.6 1602,989.6" fill="none" stroke="#f0a030" stroke-width="1.3"/><line x1="1607.6" y1="989.6" x2="1607.6" y2="993" stroke="#555" stroke-width="1.2"/><rect x="1611.4" y="985.4" width="31" height="10" fill="#dbeaf8" stroke="#5aa2dc" stroke-width="1" rx="3"/><path d="M1626.8,993 V988 M1624.6,990 L1626.8,987.4 L1629,990" fill="none" stroke="#234" stroke-width="1.2"/><circle cx="1660.6" cy="1000.6" r="12" fill="#fff" stroke="#e8901c" stroke-width="1.4"/><path d="M1654,993 C1656,990 1662,989.6 1665,992" fill="none" stroke="#333" stroke-width="1.6"/><path d="M1682,985 L1687,990 M1687,985 L1682,990" fill="none" stroke="#f07020" stroke-width="1.3"/><path d="M1690.6,988.6 L1693.4,991.4 M1693.4,988.6 L1690.6,991.4" fill="none" stroke="#e8141c" stroke-width="1"/><line x1="1709.6" y1="989.6" x2="1709.6" y2="993" stroke="#555" stroke-width="1.2"/><polygon points="1726,993 1731,987 1743,987 1748,993" fill="none" stroke="#333" stroke-width="1.2"/><polygon points="1758,993 1770,985 1782,993 1778,993 1770,988.6 1762,993" fill="#f0a030" stroke="#c06010" stroke-width="0.7"/><line x1="1791.4" y1="989.6" x2="1791.4" y2="993" stroke="#555" stroke-width="1.2"/><polygon points="1797,987 1817,987 1814,993 1800,993" fill="#fbe3cc" stroke="#f0a060" stroke-width="1"/><line x1="1807" y1="987" x2="1807" y2="993" stroke="#f0a060" stroke-width="1"/></g>
</svg>
</body></html>
